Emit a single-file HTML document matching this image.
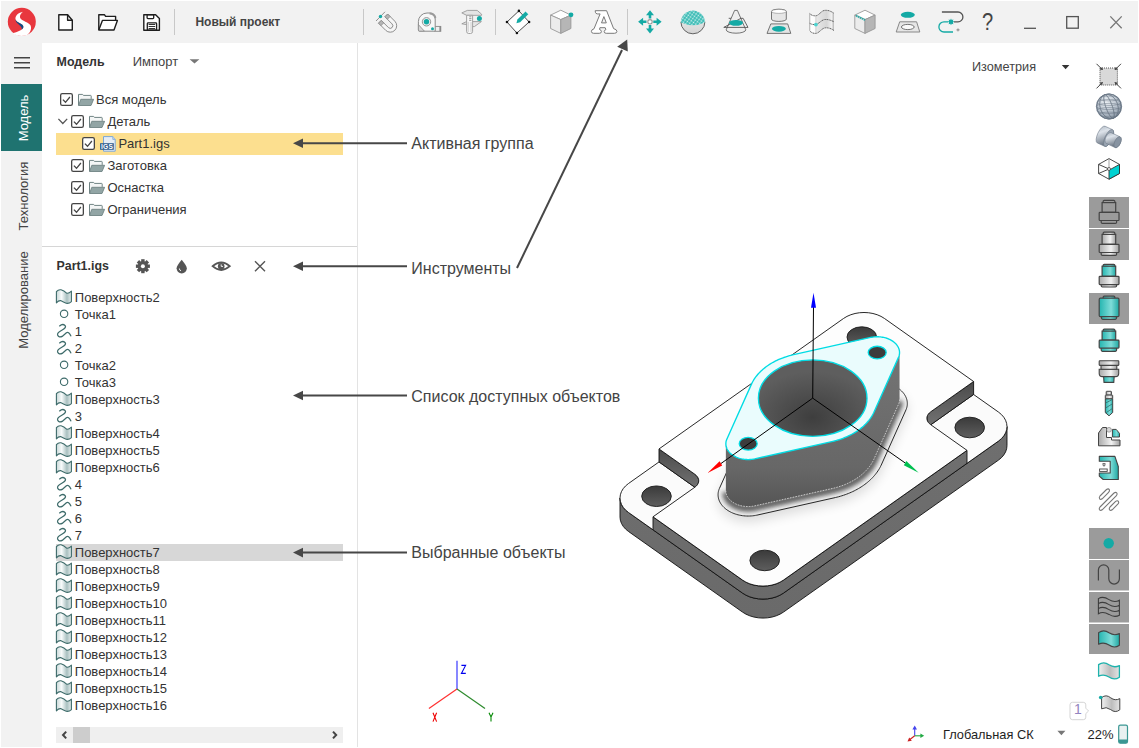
<!DOCTYPE html><html><head><meta charset="utf-8"><style>
html,body{margin:0;padding:0;}
body{width:1139px;height:748px;position:relative;overflow:hidden;background:#fff;font-family:"Liberation Sans", sans-serif;}
.t{position:absolute;white-space:nowrap;line-height:1;}
svg{position:absolute;overflow:visible;}
</style></head><body><div style="position:absolute;left:1px;top:1px;width:1137px;height:42px;background:#f2f2f2;"></div>
<div style="position:absolute;left:1px;top:43px;width:41px;height:704px;background:#f2f2f2;"></div>
<div style="position:absolute;left:357px;top:43px;width:1px;height:704px;background:#e3e3e3;"></div>
<div style="position:absolute;left:42px;top:246px;width:315px;height:1px;background:#d6d6d6;"></div>
<div style="position:absolute;left:1px;top:84px;width:41px;height:67px;background:#1f7370;"></div>
<div class="t" style="left:195.4px;top:15.54px;font-size:12px;font-weight:700;color:#444;">Новый проект</div>
<div style="position:absolute;left:174px;top:9px;width:1px;height:26px;background:#c8c8c8;"></div>
<div style="position:absolute;left:363px;top:9px;width:1px;height:26px;background:#c8c8c8;"></div>
<div style="position:absolute;left:495px;top:9px;width:1px;height:26px;background:#c8c8c8;"></div>
<div style="position:absolute;left:627px;top:9px;width:1px;height:26px;background:#c8c8c8;"></div>
<div class="t" style="left:22.5px;top:117.5px;font-size:13px;color:#fff;transform:translate(-50%,-50%) rotate(-90deg);">Модель</div>
<div class="t" style="left:22.5px;top:196px;font-size:13px;color:#444;transform:translate(-50%,-50%) rotate(-90deg);">Технология</div>
<div class="t" style="left:22.5px;top:300px;font-size:13px;color:#444;transform:translate(-50%,-50%) rotate(-90deg);">Моделирование</div>
<div class="t" style="left:56.6px;top:55.90px;font-size:12.4px;font-weight:700;color:#333;">Модель</div>
<div class="t" style="left:132.7px;top:55.40px;font-size:13px;font-weight:400;color:#444;">Импорт</div>
<div style="position:absolute;left:56px;top:133px;width:287px;height:22px;background:#fcdf8f;"></div>
<div class="t" style="left:96px;top:93.30px;font-size:13px;font-weight:400;color:#333;">Вся модель</div>
<div class="t" style="left:107.4px;top:115.30px;font-size:13px;font-weight:400;color:#333;">Деталь</div>
<div class="t" style="left:118.4px;top:137.30px;font-size:13px;font-weight:400;color:#333;">Part1.igs</div>
<div class="t" style="left:107.4px;top:159.30px;font-size:13px;font-weight:400;color:#333;">Заготовка</div>
<div class="t" style="left:107.4px;top:181.30px;font-size:13px;font-weight:400;color:#333;">Оснастка</div>
<div class="t" style="left:107.4px;top:203.30px;font-size:13px;font-weight:400;color:#333;">Ограничения</div>
<div class="t" style="left:56.5px;top:259.70px;font-size:12.4px;font-weight:700;color:#333;">Part1.igs</div>
<div style="position:absolute;left:56px;top:544px;width:287px;height:17px;background:#d7d7d7;"></div>
<div class="t" style="left:74.8px;top:291.00px;font-size:13px;font-weight:400;color:#333;">Поверхность2</div>
<div class="t" style="left:74.8px;top:308.00px;font-size:13px;font-weight:400;color:#333;">Точка1</div>
<div class="t" style="left:74.8px;top:325.00px;font-size:13px;font-weight:400;color:#333;">1</div>
<div class="t" style="left:74.8px;top:342.00px;font-size:13px;font-weight:400;color:#333;">2</div>
<div class="t" style="left:74.8px;top:359.00px;font-size:13px;font-weight:400;color:#333;">Точка2</div>
<div class="t" style="left:74.8px;top:376.00px;font-size:13px;font-weight:400;color:#333;">Точка3</div>
<div class="t" style="left:74.8px;top:393.00px;font-size:13px;font-weight:400;color:#333;">Поверхность3</div>
<div class="t" style="left:74.8px;top:410.00px;font-size:13px;font-weight:400;color:#333;">3</div>
<div class="t" style="left:74.8px;top:427.00px;font-size:13px;font-weight:400;color:#333;">Поверхность4</div>
<div class="t" style="left:74.8px;top:444.00px;font-size:13px;font-weight:400;color:#333;">Поверхность5</div>
<div class="t" style="left:74.8px;top:461.00px;font-size:13px;font-weight:400;color:#333;">Поверхность6</div>
<div class="t" style="left:74.8px;top:478.00px;font-size:13px;font-weight:400;color:#333;">4</div>
<div class="t" style="left:74.8px;top:495.00px;font-size:13px;font-weight:400;color:#333;">5</div>
<div class="t" style="left:74.8px;top:512.00px;font-size:13px;font-weight:400;color:#333;">6</div>
<div class="t" style="left:74.8px;top:529.00px;font-size:13px;font-weight:400;color:#333;">7</div>
<div class="t" style="left:74.8px;top:546.00px;font-size:13px;font-weight:400;color:#333;">Поверхность7</div>
<div class="t" style="left:74.8px;top:563.00px;font-size:13px;font-weight:400;color:#333;">Поверхность8</div>
<div class="t" style="left:74.8px;top:580.00px;font-size:13px;font-weight:400;color:#333;">Поверхность9</div>
<div class="t" style="left:74.8px;top:597.00px;font-size:13px;font-weight:400;color:#333;">Поверхность10</div>
<div class="t" style="left:74.8px;top:614.00px;font-size:13px;font-weight:400;color:#333;">Поверхность11</div>
<div class="t" style="left:74.8px;top:631.00px;font-size:13px;font-weight:400;color:#333;">Поверхность12</div>
<div class="t" style="left:74.8px;top:648.00px;font-size:13px;font-weight:400;color:#333;">Поверхность13</div>
<div class="t" style="left:74.8px;top:665.00px;font-size:13px;font-weight:400;color:#333;">Поверхность14</div>
<div class="t" style="left:74.8px;top:682.00px;font-size:13px;font-weight:400;color:#333;">Поверхность15</div>
<div class="t" style="left:74.8px;top:699.00px;font-size:13px;font-weight:400;color:#333;">Поверхность16</div>
<div style="position:absolute;left:56px;top:727px;width:287px;height:16px;background:#efefef;"></div>
<div style="position:absolute;left:73px;top:727px;width:17px;height:16px;background:#cdcdcd;"></div>
<div class="t" style="left:411.3px;top:136.16px;font-size:16px;font-weight:400;color:#444;">Активная группа</div>
<div class="t" style="left:411.3px;top:261.36px;font-size:16px;font-weight:400;color:#444;">Инструменты</div>
<div class="t" style="left:411.3px;top:389.16px;font-size:16px;font-weight:400;color:#444;">Список доступных объектов</div>
<div class="t" style="left:411.3px;top:545.26px;font-size:16px;font-weight:400;color:#444;">Выбранные объекты</div>
<div class="t" style="left:972px;top:61.25px;font-size:12.7px;font-weight:400;color:#444;">Изометрия</div>
<div class="t" style="left:943px;top:728.66px;font-size:12.8px;font-weight:400;color:#1e1e1e;">Глобальная СК</div>
<div class="t" style="left:1087.5px;top:727.60px;font-size:13px;font-weight:400;color:#1e1e1e;">22%</div>
<svg width="1139" height="748" style="left:0;top:0"><circle cx="21.8" cy="21.8" r="14" fill="#e8373e"/><path d="M23.2 11.8 C18.5 12.6 14.6 16 15.6 19.6 C16.6 23.2 23.6 23.6 23.4 27 C23.2 29.8 17 32.2 12.6 33.2 C16 35.6 20.5 36.2 24 35.8 L27 35.2 C30.5 32.5 31.8 28.6 30.6 25.6 C29.4 22.6 21.4 20.8 20.2 18 C19.4 15.8 21 13 23.2 11.8 Z" fill="#fff"/><path d="M15.6 19.6 C16.6 23.2 23.6 23.6 23.4 27 C23.3 28.2 22.4 29.2 21.6 29.6 C22.8 27 18.4 24.6 16.6 22.6 C15.8 21.6 15.5 20.6 15.6 19.6 Z" fill="#0d4f86"/><path d="M58.8 14.7 H67.6 L72.3 20.3 V30 H58.8 Z" fill="#fff" stroke="#1e1e1e" stroke-width="1.4" stroke-linejoin="round"/><path d="M67.6 14.7 V20.3 H72.3" fill="none" stroke="#1e1e1e" stroke-width="1.4" stroke-linejoin="round"/><path d="M98.8 30 V14.7 H104.4 L105.6 16.4 H115.6 V20.4" fill="#fff" stroke="#1e1e1e" stroke-width="1.4" stroke-linejoin="round"/><path d="M98.8 30 L102.4 20.4 H117.4 L114 30 Z" fill="#fff" stroke="#1e1e1e" stroke-width="1.4" stroke-linejoin="round"/><path d="M143.8 14.7 H155.6 L159.4 18.4 V30.2 H143.8 Z" fill="#fff" stroke="#1e1e1e" stroke-width="1.4" stroke-linejoin="round"/><rect x="147.1" y="14.7" width="6.6" height="3.9" rx="0.8" fill="none" stroke="#1e1e1e" stroke-width="1.3"/><rect x="147.3" y="22.9" width="9.3" height="7.3" rx="0.8" fill="none" stroke="#1e1e1e" stroke-width="1.3"/><path d="M148.6 24.5 H155.2 M148.6 26.5 H155.2 M148.6 28.5 H155.2" stroke="#1e1e1e" stroke-width="0.9"/><g transform="translate(389.6,25.1) rotate(-45) scale(0.92)"><path d="M-7 -10 V1 A7 7 0 0 0 7 1 V-10 H2.8 V1 A2.8 2.8 0 0 1 -2.8 1 V-10 Z" fill="#f6f6f6" stroke="#8a8a8a" stroke-width="1"/><rect x="-7" y="-10" width="4.2" height="3.8" fill="#b5b5b5" stroke="#8a8a8a" stroke-width="0.8"/><rect x="2.8" y="-10" width="4.2" height="3.8" fill="#b5b5b5" stroke="#8a8a8a" stroke-width="0.8"/></g><line x1="376" y1="21" x2="385" y2="11.8" stroke="#777" stroke-width="0.8"/><circle cx="380.5" cy="16.5" r="1.7" fill="#14aaa5"/><rect x="434.8" y="26.4" width="6" height="4.9" fill="#efefef" stroke="#8a8a8a" stroke-width="0.9"/><rect x="439.4" y="26.4" width="1.6" height="4.9" fill="#8a8a8a"/><path d="M418.4 30 V21.6 A8.6 8.6 0 0 1 427 13 H430 Q435.2 13.2 435.2 19 V31.2 H419.6 Q418.4 31.2 418.4 30 Z" fill="#f8f8f8" stroke="#8a8a8a" stroke-width="1"/><path d="M429.6 12.6 Q435 12.6 436.4 17.6 L434.6 18.6 Q433.4 14.6 429.6 14.6 Z" fill="#9a9a9a"/><path d="M418.4 24.6 L424.4 31.2 H419.6 Q418.4 31.2 418.4 30 Z" fill="#d8d8d8" stroke="#8a8a8a" stroke-width="0.8"/><circle cx="426.5" cy="21.8" r="4.2" fill="#eee" stroke="#8a8a8a" stroke-width="0.9"/><circle cx="426.5" cy="21.8" r="2.7" fill="#14aaa5"/><circle cx="432.5" cy="28.8" r="1.5" fill="#14aaa5"/><path d="M461.8 12.9 L467.4 10.4 H477.2 L481.6 14.2 V15.3 H466.6 Z" fill="#e4e4e4" stroke="#9a9a9a" stroke-width="0.9" stroke-linejoin="round"/><path d="M461.8 23.8 L466.6 21.6 H481.4 L474.4 26.6 H472.6 V27 L466.6 24.6 Z" fill="#e6e6e6" stroke="#9a9a9a" stroke-width="0.9" stroke-linejoin="round"/><path d="M466.6 15.3 V31.4 Q466.6 33.5 468.7 33.5 H470.5 Q472.6 33.5 472.6 31.4 V15.3 Z" fill="#f7f7f7" stroke="#9a9a9a" stroke-width="0.9"/><path d="M468.2 22 V32 M471 22 V32" stroke="#c4c4c4" stroke-width="0.8"/><path d="M469.2 16.8 H471.4 M469.2 18.6 H471.4 M469.2 20.4 H471.4" stroke="#777" stroke-width="0.7"/><circle cx="479.4" cy="18.5" r="2.5" fill="#14aaa5"/><path d="M518.9 10.9 L529.1 22 L516.9 33 L507 22 Z" fill="#fff" stroke="#222" stroke-width="0.8"/><circle cx="518.9" cy="10.9" r="1.3" fill="#111"/><circle cx="529.1" cy="22" r="1.3" fill="#111"/><circle cx="516.9" cy="33" r="1.3" fill="#111"/><circle cx="507" cy="22" r="1.3" fill="#111"/><path d="M516.4 23.3 L517.4 19.6 L525.6 11.6 L528.3 14.3 L520.1 22.3 Z" fill="#14aaa5"/><path d="M526.3 12.3 L527.6 13.6" stroke="#8ee" stroke-width="0.6"/><path d="M560.8 10.2 L570.9 15.1 L560.8 19.6 L550.6 15.1 Z" fill="#fff" stroke="#999" stroke-width="0.9" stroke-linejoin="round"/><path d="M550.6 15.1 L560.8 19.6 V33.4 L550.6 28.5 Z" fill="#ececec" stroke="#999" stroke-width="0.9" stroke-linejoin="round"/><path d="M570.9 15.1 L560.8 19.6 V33.4 L570.9 28.5 Z" fill="#b6b6b6" stroke="#999" stroke-width="0.9" stroke-linejoin="round"/><circle cx="571" cy="14.8" r="2.4" fill="#14aaa5"/><path d="M595.2 10.7 H606.6 L613.6 28.6 Q616.9 29.4 616.9 31.4 Q616.9 33.3 614.4 33.3 H606.2 Q604.1 33.3 604.2 31.5 Q604.3 30.1 605.9 29.6 L605.2 27.7 H599.9 L599.5 29.5 Q601.4 30 601.4 31.6 Q601.4 33.3 599.3 33.3 H593.6 Q591.4 33.3 591.4 31.4 Q591.4 29.5 594 28.8 L600.1 13.9 Q597.4 14.3 596 13.4 Q595.2 12.6 595.2 10.7 Z M603.9 16.6 L601.5 22.9 H606.3 Z" fill="#fff" fill-rule="evenodd" stroke="#7a7a7a" stroke-width="1" stroke-linejoin="round"/><g fill="#14aaa5"><path d="M650 10.2 L654 15.2 H651.3 V18.6 H648.7 V15.2 H646 Z"/><path d="M650 33.4 L654 28.4 H651.3 V25 H648.7 V28.4 H646 Z"/><path d="M638.1 21.8 L643.1 17.8 V20.5 H646.5 V23.1 H643.1 V25.8 Z"/><path d="M661.6 21.8 L656.6 17.8 V20.5 H653.3 V23.1 H656.6 V25.8 Z"/></g><circle cx="650" cy="21.8" r="2.2" fill="#fff" stroke="#999" stroke-width="1.1"/><defs><linearGradient id="gsph" x1="0" y1="0" x2="0" y2="1"><stop offset="0" stop-color="#f4f4f4"/><stop offset="1" stop-color="#d4d4d4"/></linearGradient><pattern id="ptt" width="2.8" height="2.8" patternUnits="userSpaceOnUse" patternTransform="rotate(35)"><rect width="2.8" height="2.8" fill="#38bab4"/><circle cx="1.4" cy="1.4" r="0.85" fill="#d2f2f0"/></pattern></defs><circle cx="692.9" cy="21.8" r="12" fill="url(#gsph)"/><path d="M680.9 21.8 A12 12 0 0 0 704.9 21.8" fill="none" stroke="#555" stroke-width="0.9"/><path d="M680.9 22.6 A12 12 0 0 1 704.9 22.6 Q693 28 680.9 22.6 Z" fill="url(#ptt)"/><path d="M726.2 29.8 L734.6 10.4 H737.4 L745.8 29.8 A9.8 3.4 0 0 1 726.2 29.8 Z" fill="#eee" stroke="#666" stroke-width="0.9"/><path d="M728.7 18.3 H731 M741 18.3 H743.1 L748 27.4 H723.8 Z" fill="none" stroke="#555" stroke-width="0.9"/><ellipse cx="736" cy="22.9" rx="7" ry="2.9" fill="#14aaa5"/><path d="M771.5 11.4 A7.4 2.2 0 0 1 786.3 11.4 V19.2 A7.4 2.2 0 0 1 771.5 19.2 Z" fill="#e6e6e6" stroke="#666" stroke-width="0.9"/><ellipse cx="778.9" cy="11.4" rx="7.4" ry="2" fill="#fff" stroke="#888" stroke-width="0.6"/><path d="M770.8 23.9 H787.7 L790.8 33.4 H767 Z" fill="#e4e4e4" stroke="#666" stroke-width="0.9"/><ellipse cx="778.9" cy="28.8" rx="7" ry="2.9" fill="#14aaa5"/><defs><linearGradient id="gwav" x1="0" y1="0" x2="1" y2="0"><stop offset="0" stop-color="#ffffff"/><stop offset="0.28" stop-color="#fafafa"/><stop offset="0.32" stop-color="#e6e6e6"/><stop offset="0.7" stop-color="#d6d6d6"/><stop offset="0.9" stop-color="#f0f0f0"/><stop offset="1" stop-color="#b4b4b4"/></linearGradient></defs><path d="M809.7 13.5 C811.5 15.5 814 16.2 816.5 15.6 C819.5 14.8 821.5 10.5 825 10.3 C829 10 832 12 834 13.3 V30.6 C832 29 829 27.6 825.5 27.8 C821.5 28.2 819 33.4 815.7 33.4 C813 33.6 810.5 32 809.7 30.8 Z" fill="url(#gwav)"/><path d="M816 15.8 V33.3" stroke="#cfcfcf" stroke-width="1.3"/><path d="M809.7 13.5 V30.8" stroke="#b8b8b8" stroke-width="1.2"/><path d="M809.7 13.5 C811.5 15.5 814 16.2 816.5 15.6 C819.5 14.8 821.5 10.5 825 10.3 C829 10 832 12 834 13.3 M834 30.6 C832 29 829 27.6 825.5 27.8 C821.5 28.2 819 33.4 815.7 33.4 C813 33.6 810.5 32 809.7 30.8 M809.7 23.3 C811.5 24.4 813.5 24.8 816 24.4 C819 23.8 821.5 19.8 825 19.5 C829 19.3 832 20.8 834 21.8" fill="none" stroke="#555" stroke-width="0.9" stroke-dasharray="1.2 0.5"/><circle cx="815.9" cy="24.6" r="1.9" fill="#4fd3cf"/><path d="M865 10.2 L875.1 15.1 L865 19.6 L854.8 15.1 Z" fill="#fff" stroke="#999" stroke-width="0.9" stroke-linejoin="round"/><path d="M854.8 15.1 L865 19.6 V33.4 L854.8 28.5 Z" fill="#ececec" stroke="#999" stroke-width="0.9" stroke-linejoin="round"/><path d="M875.1 15.1 L865 19.6 V33.4 L875.1 28.5 Z" fill="#b6b6b6" stroke="#999" stroke-width="0.9" stroke-linejoin="round"/><path d="M856 15.6 L865 20" stroke="#14aaa5" stroke-width="2.2" stroke-dasharray="1.4 0.8" opacity="0.8"/><ellipse cx="907.8" cy="14.8" rx="7" ry="3" fill="#14aaa5"/><path d="M899.7 21.8 H916.6 L919.8 32 H896.2 Z" fill="#e6e6e6" stroke="#888" stroke-width="1"/><ellipse cx="907.8" cy="27" rx="6.4" ry="2.6" fill="#fafafa" stroke="#666" stroke-width="0.9"/><path d="M941.9 12 H958 A4.9 4.9 0 0 1 958 21.8 H954" fill="none" stroke="#555" stroke-width="1.3"/><path d="M948 21.8 H944 A5 5 0 0 0 944 32 H953" fill="none" stroke="#14aaa5" stroke-width="1.3"/><polygon points="951.00,18.40 951.77,19.95 953.40,19.40 952.85,21.03 954.40,21.80 952.85,22.57 953.40,24.20 951.77,23.65 951.00,25.20 950.23,23.65 948.60,24.20 949.15,22.57 947.60,21.80 949.15,21.03 948.60,19.40 950.23,19.95" fill="#14aaa5"/><polygon points="958.00,27.70 958.57,29.33 960.20,29.90 958.57,30.47 958.00,32.10 957.43,30.47 955.80,29.90 957.43,29.33" fill="#8a8a8a"/><text x="987.5" y="30.3" text-anchor="middle" font-family="Liberation Sans" font-size="24" fill="#444" transform="translate(987.5 0) scale(0.84 1) translate(-987.5 0)">?</text><line x1="1024" y1="28.3" x2="1036" y2="28.3" stroke="#555" stroke-width="1.3"/><rect x="1066.7" y="16.6" width="11.6" height="11.6" fill="none" stroke="#555" stroke-width="1.3"/><path d="M1110.3 16.4 L1121.7 28.2 M1121.7 16.4 L1110.3 28.2" stroke="#777" stroke-width="1.3"/><path d="M14 57.8 H30 M14 62.8 H30 M14 67.8 H30" stroke="#444" stroke-width="1.5"/><rect x="60.65" y="93.65" width="11.7" height="11.7" rx="1.6" fill="#fff" stroke="#454545" stroke-width="1.3"/><path d="M62.9 99.6 L65.5 102.3 L69.9 97" fill="none" stroke="#454545" stroke-width="1.3"/><path d="M78.5 105.4 V94.4 H82.6 L83.4 95.4 H90.6 Q91.2 95.4 91.2 96.10000000000001 V98.9" fill="#f4f6f6" stroke="#6f8383" stroke-width="1"/><path d="M78.6 105.5 L80.8 99.30000000000001 H93.6 L91 105.5 Z" fill="#92a5a5" stroke="#6f8383" stroke-width="0.9" stroke-linejoin="round"/><rect x="71.65" y="115.65" width="11.7" height="11.7" rx="1.6" fill="#fff" stroke="#454545" stroke-width="1.3"/><path d="M73.9 121.6 L76.5 124.3 L80.9 119" fill="none" stroke="#454545" stroke-width="1.3"/><path d="M89.5 127.4 V116.4 H93.6 L94.4 117.4 H101.6 Q102.2 117.4 102.2 118.10000000000001 V120.9" fill="#f4f6f6" stroke="#6f8383" stroke-width="1"/><path d="M89.6 127.5 L91.8 121.30000000000001 H104.6 L102 127.5 Z" fill="#92a5a5" stroke="#6f8383" stroke-width="0.9" stroke-linejoin="round"/><rect x="71.65" y="159.65" width="11.7" height="11.7" rx="1.6" fill="#fff" stroke="#454545" stroke-width="1.3"/><path d="M73.9 165.6 L76.5 168.3 L80.9 163" fill="none" stroke="#454545" stroke-width="1.3"/><path d="M89.5 171.4 V160.4 H93.6 L94.4 161.4 H101.6 Q102.2 161.4 102.2 162.1 V164.9" fill="#f4f6f6" stroke="#6f8383" stroke-width="1"/><path d="M89.6 171.5 L91.8 165.3 H104.6 L102 171.5 Z" fill="#92a5a5" stroke="#6f8383" stroke-width="0.9" stroke-linejoin="round"/><rect x="71.65" y="181.65" width="11.7" height="11.7" rx="1.6" fill="#fff" stroke="#454545" stroke-width="1.3"/><path d="M73.9 187.6 L76.5 190.3 L80.9 185" fill="none" stroke="#454545" stroke-width="1.3"/><path d="M89.5 193.4 V182.4 H93.6 L94.4 183.4 H101.6 Q102.2 183.4 102.2 184.1 V186.9" fill="#f4f6f6" stroke="#6f8383" stroke-width="1"/><path d="M89.6 193.5 L91.8 187.3 H104.6 L102 193.5 Z" fill="#92a5a5" stroke="#6f8383" stroke-width="0.9" stroke-linejoin="round"/><rect x="71.65" y="203.65" width="11.7" height="11.7" rx="1.6" fill="#fff" stroke="#454545" stroke-width="1.3"/><path d="M73.9 209.6 L76.5 212.3 L80.9 207" fill="none" stroke="#454545" stroke-width="1.3"/><path d="M89.5 215.4 V204.4 H93.6 L94.4 205.4 H101.6 Q102.2 205.4 102.2 206.1 V208.9" fill="#f4f6f6" stroke="#6f8383" stroke-width="1"/><path d="M89.6 215.5 L91.8 209.3 H104.6 L102 215.5 Z" fill="#92a5a5" stroke="#6f8383" stroke-width="0.9" stroke-linejoin="round"/><rect x="82.65" y="137.65" width="11.7" height="11.7" rx="1.6" fill="#fff" stroke="#454545" stroke-width="1.3"/><path d="M84.9 143.6 L87.5 146.3 L91.9 141" fill="none" stroke="#454545" stroke-width="1.3"/><path d="M58.4 118.9 L62.8 123.5 L67.2 118.9" fill="none" stroke="#555" stroke-width="1.3"/><path d="M103.5 136.6 H112.8 L115.2 139.4 V151.2 H103.5 Z" fill="#e6edf5" stroke="#7aa7d8" stroke-width="1"/><path d="M112.8 136.6 V139.4 H115.2" fill="#cfdcec" stroke="#7aa7d8" stroke-width="0.8"/><rect x="100.1" y="143.2" width="13.7" height="6.6" fill="#2f5c8e"/><text x="107" y="149" text-anchor="middle" font-family="Liberation Sans" font-weight="700" font-size="6.6" fill="#fff" letter-spacing="0.2">IGS</text><path d="M189.6 59.2 H199.4 L194.5 63.6 Z" fill="#777"/><g fill="#555"><rect x="141.20000000000002" y="259.2" width="3.4" height="4" transform="rotate(0 142.9 266.2)"/><rect x="141.20000000000002" y="259.2" width="3.4" height="4" transform="rotate(45 142.9 266.2)"/><rect x="141.20000000000002" y="259.2" width="3.4" height="4" transform="rotate(90 142.9 266.2)"/><rect x="141.20000000000002" y="259.2" width="3.4" height="4" transform="rotate(135 142.9 266.2)"/><rect x="141.20000000000002" y="259.2" width="3.4" height="4" transform="rotate(180 142.9 266.2)"/><rect x="141.20000000000002" y="259.2" width="3.4" height="4" transform="rotate(225 142.9 266.2)"/><rect x="141.20000000000002" y="259.2" width="3.4" height="4" transform="rotate(270 142.9 266.2)"/><rect x="141.20000000000002" y="259.2" width="3.4" height="4" transform="rotate(315 142.9 266.2)"/><circle cx="142.9" cy="266.2" r="5.2"/></g><circle cx="142.9" cy="266.2" r="2" fill="#fff"/><path d="M181.7 259.8 Q186.8 266 186.8 268.3 A5.1 5.1 0 0 1 176.6 268.3 Q176.6 266 181.7 259.8 Z" fill="#555"/><path d="M179.4 268.5 Q179.4 270.4 181 270.9" fill="none" stroke="#fff" stroke-width="0.9"/><path d="M212.6 266.2 Q221.2 258.6 229.8 266.2 Q221.2 273.8 212.6 266.2 Z" fill="none" stroke="#555" stroke-width="1.8"/><circle cx="221.2" cy="266.2" r="3.3" fill="#555"/><path d="M221.2 264.4 V266.4 H223" fill="none" stroke="#fff" stroke-width="0.9"/><path d="M255 261.2 L265 271.2 M265 261.2 L255 271.2" stroke="#555" stroke-width="1.4"/><defs><linearGradient id="gsurf" x1="0" y1="0" x2="1" y2="0"><stop offset="0" stop-color="#c9d8d8"/><stop offset="0.35" stop-color="#f8fbfb"/><stop offset="0.7" stop-color="#a9c0c0"/><stop offset="1" stop-color="#e6eeee"/></linearGradient></defs><path d="M56.4 291.6 Q58.5 289.2 61 289.8 Q64 290.6 66.6 293.2 Q69 293.6 71.4 291.2 V301.6 Q69 303.8 66.2 303.2 Q63.5 302.2 60.6 300.6 Q58.4 300.4 56.4 302.8 Z" fill="url(#gsurf)" stroke="#3d6b6a" stroke-width="1.1" stroke-linejoin="round"/><circle cx="64.1" cy="313.8" r="3.7" fill="none" stroke="#3d6b6a" stroke-width="1.1"/><path d="M59.6 325.9 Q62.6 323.4 65 325.4 Q66.8 327.6 62.2 330 Q57 332.6 57.6 335 Q59 338 62.2 336.4 L66.4 332.8 Q68.6 331.2 70.8 335.8" fill="none" stroke="#3d6b6a" stroke-width="1.3" stroke-linecap="round"/><path d="M59.6 342.9 Q62.6 340.4 65 342.4 Q66.8 344.6 62.2 347 Q57 349.6 57.6 352 Q59 355 62.2 353.4 L66.4 349.8 Q68.6 348.2 70.8 352.8" fill="none" stroke="#3d6b6a" stroke-width="1.3" stroke-linecap="round"/><circle cx="64.1" cy="364.8" r="3.7" fill="none" stroke="#3d6b6a" stroke-width="1.1"/><circle cx="64.1" cy="381.8" r="3.7" fill="none" stroke="#3d6b6a" stroke-width="1.1"/><path d="M56.4 393.6 Q58.5 391.2 61 391.8 Q64 392.6 66.6 395.2 Q69 395.6 71.4 393.2 V403.6 Q69 405.8 66.2 405.2 Q63.5 404.2 60.6 402.6 Q58.4 402.4 56.4 404.8 Z" fill="url(#gsurf)" stroke="#3d6b6a" stroke-width="1.1" stroke-linejoin="round"/><path d="M59.6 410.9 Q62.6 408.4 65 410.4 Q66.8 412.6 62.2 415 Q57 417.6 57.6 420 Q59 423 62.2 421.4 L66.4 417.8 Q68.6 416.2 70.8 420.8" fill="none" stroke="#3d6b6a" stroke-width="1.3" stroke-linecap="round"/><path d="M56.4 427.6 Q58.5 425.2 61 425.8 Q64 426.6 66.6 429.2 Q69 429.6 71.4 427.2 V437.6 Q69 439.8 66.2 439.2 Q63.5 438.2 60.6 436.6 Q58.4 436.4 56.4 438.8 Z" fill="url(#gsurf)" stroke="#3d6b6a" stroke-width="1.1" stroke-linejoin="round"/><path d="M56.4 444.6 Q58.5 442.2 61 442.8 Q64 443.6 66.6 446.2 Q69 446.6 71.4 444.2 V454.6 Q69 456.8 66.2 456.2 Q63.5 455.2 60.6 453.6 Q58.4 453.4 56.4 455.8 Z" fill="url(#gsurf)" stroke="#3d6b6a" stroke-width="1.1" stroke-linejoin="round"/><path d="M56.4 461.6 Q58.5 459.2 61 459.8 Q64 460.6 66.6 463.2 Q69 463.6 71.4 461.2 V471.6 Q69 473.8 66.2 473.2 Q63.5 472.2 60.6 470.6 Q58.4 470.4 56.4 472.8 Z" fill="url(#gsurf)" stroke="#3d6b6a" stroke-width="1.1" stroke-linejoin="round"/><path d="M59.6 478.9 Q62.6 476.4 65 478.4 Q66.8 480.6 62.2 483 Q57 485.6 57.6 488 Q59 491 62.2 489.4 L66.4 485.8 Q68.6 484.2 70.8 488.8" fill="none" stroke="#3d6b6a" stroke-width="1.3" stroke-linecap="round"/><path d="M59.6 495.9 Q62.6 493.4 65 495.4 Q66.8 497.6 62.2 500 Q57 502.6 57.6 505 Q59 508 62.2 506.4 L66.4 502.8 Q68.6 501.2 70.8 505.8" fill="none" stroke="#3d6b6a" stroke-width="1.3" stroke-linecap="round"/><path d="M59.6 512.9 Q62.6 510.4 65 512.4 Q66.8 514.6 62.2 517 Q57 519.6 57.6 522 Q59 525 62.2 523.4 L66.4 519.8 Q68.6 518.2 70.8 522.8" fill="none" stroke="#3d6b6a" stroke-width="1.3" stroke-linecap="round"/><path d="M59.6 529.9 Q62.6 527.4 65 529.4 Q66.8 531.6 62.2 534 Q57 536.6 57.6 539 Q59 542 62.2 540.4 L66.4 536.8 Q68.6 535.2 70.8 539.8" fill="none" stroke="#3d6b6a" stroke-width="1.3" stroke-linecap="round"/><path d="M56.4 546.6 Q58.5 544.2 61 544.8 Q64 545.6 66.6 548.2 Q69 548.6 71.4 546.2 V556.6 Q69 558.8 66.2 558.2 Q63.5 557.2 60.6 555.6 Q58.4 555.4 56.4 557.8 Z" fill="url(#gsurf)" stroke="#3d6b6a" stroke-width="1.1" stroke-linejoin="round"/><path d="M56.4 563.6 Q58.5 561.2 61 561.8 Q64 562.6 66.6 565.2 Q69 565.6 71.4 563.2 V573.6 Q69 575.8 66.2 575.2 Q63.5 574.2 60.6 572.6 Q58.4 572.4 56.4 574.8 Z" fill="url(#gsurf)" stroke="#3d6b6a" stroke-width="1.1" stroke-linejoin="round"/><path d="M56.4 580.6 Q58.5 578.2 61 578.8 Q64 579.6 66.6 582.2 Q69 582.6 71.4 580.2 V590.6 Q69 592.8 66.2 592.2 Q63.5 591.2 60.6 589.6 Q58.4 589.4 56.4 591.8 Z" fill="url(#gsurf)" stroke="#3d6b6a" stroke-width="1.1" stroke-linejoin="round"/><path d="M56.4 597.6 Q58.5 595.2 61 595.8 Q64 596.6 66.6 599.2 Q69 599.6 71.4 597.2 V607.6 Q69 609.8 66.2 609.2 Q63.5 608.2 60.6 606.6 Q58.4 606.4 56.4 608.8 Z" fill="url(#gsurf)" stroke="#3d6b6a" stroke-width="1.1" stroke-linejoin="round"/><path d="M56.4 614.6 Q58.5 612.2 61 612.8 Q64 613.6 66.6 616.2 Q69 616.6 71.4 614.2 V624.6 Q69 626.8 66.2 626.2 Q63.5 625.2 60.6 623.6 Q58.4 623.4 56.4 625.8 Z" fill="url(#gsurf)" stroke="#3d6b6a" stroke-width="1.1" stroke-linejoin="round"/><path d="M56.4 631.6 Q58.5 629.2 61 629.8 Q64 630.6 66.6 633.2 Q69 633.6 71.4 631.2 V641.6 Q69 643.8 66.2 643.2 Q63.5 642.2 60.6 640.6 Q58.4 640.4 56.4 642.8 Z" fill="url(#gsurf)" stroke="#3d6b6a" stroke-width="1.1" stroke-linejoin="round"/><path d="M56.4 648.6 Q58.5 646.2 61 646.8 Q64 647.6 66.6 650.2 Q69 650.6 71.4 648.2 V658.6 Q69 660.8 66.2 660.2 Q63.5 659.2 60.6 657.6 Q58.4 657.4 56.4 659.8 Z" fill="url(#gsurf)" stroke="#3d6b6a" stroke-width="1.1" stroke-linejoin="round"/><path d="M56.4 665.6 Q58.5 663.2 61 663.8 Q64 664.6 66.6 667.2 Q69 667.6 71.4 665.2 V675.6 Q69 677.8 66.2 677.2 Q63.5 676.2 60.6 674.6 Q58.4 674.4 56.4 676.8 Z" fill="url(#gsurf)" stroke="#3d6b6a" stroke-width="1.1" stroke-linejoin="round"/><path d="M56.4 682.6 Q58.5 680.2 61 680.8 Q64 681.6 66.6 684.2 Q69 684.6 71.4 682.2 V692.6 Q69 694.8 66.2 694.2 Q63.5 693.2 60.6 691.6 Q58.4 691.4 56.4 693.8 Z" fill="url(#gsurf)" stroke="#3d6b6a" stroke-width="1.1" stroke-linejoin="round"/><path d="M56.4 699.6 Q58.5 697.2 61 697.8 Q64 698.6 66.6 701.2 Q69 701.6 71.4 699.2 V709.6 Q69 711.8 66.2 711.2 Q63.5 710.2 60.6 708.6 Q58.4 708.4 56.4 710.8 Z" fill="url(#gsurf)" stroke="#3d6b6a" stroke-width="1.1" stroke-linejoin="round"/><path d="M66.2 731.6 L63 735 L66.2 738.4" fill="none" stroke="#444" stroke-width="2"/><path d="M333 731.6 L336.2 735 L333 738.4" fill="none" stroke="#444" stroke-width="2"/><defs><linearGradient id="gsil" x1="0" y1="0" x2="1" y2="0"><stop offset="0" stop-color="#a9a9a9"/><stop offset="0.6" stop-color="#f2f2f2"/><stop offset="1" stop-color="#a0a0a0"/></linearGradient><linearGradient id="gtl" x1="0" y1="0" x2="1" y2="0"><stop offset="0" stop-color="#24b5b0"/><stop offset="0.6" stop-color="#7fdcd8"/><stop offset="1" stop-color="#20a8a3"/></linearGradient><linearGradient id="gflag" x1="0" y1="0" x2="1" y2="0"><stop offset="0" stop-color="#f0f0f0"/><stop offset="0.55" stop-color="#bdbdbd"/><stop offset="1" stop-color="#e4e4e4"/></linearGradient><radialGradient id="gsph2" cx="0.4" cy="0.3" r="0.75"><stop offset="0" stop-color="#eef2f6"/><stop offset="0.6" stop-color="#b6c0cb"/><stop offset="1" stop-color="#7f8c9b"/></radialGradient><linearGradient id="gshaft" x1="0" y1="0" x2="0" y2="1"><stop offset="0" stop-color="#d9dee4"/><stop offset="1" stop-color="#7f8995"/></linearGradient></defs><rect x="1089" y="197" width="40" height="31" fill="#9b9b9b"/><rect x="1089" y="229" width="40" height="31" fill="#9b9b9b"/><rect x="1089" y="293" width="40" height="31" fill="#9b9b9b"/><rect x="1089" y="528" width="40" height="31" fill="#9b9b9b"/><rect x="1089" y="560" width="40" height="30.5" fill="#9b9b9b"/><rect x="1089" y="592" width="40" height="30.5" fill="#9b9b9b"/><rect x="1089" y="624" width="40" height="30" fill="#9b9b9b"/><rect x="1100" y="68" width="17.4" height="17" fill="#d9d9d9" stroke="#555" stroke-width="1" stroke-dasharray="1 1"/><path d="M1096.5 63.8 L1102.5 69.8 M1121 63.8 L1115 69.8 M1096.5 88.4 L1102.5 82.4 M1121 88.4 L1115 82.4" stroke="#444" stroke-width="1"/><path d="M1102.8 70.1 L1099.6 69.4 L1102.1 66.9 Z M1114.7 70.1 L1117.9 69.4 L1115.4 66.9 Z M1102.8 82.1 L1099.6 82.8 L1102.1 85.3 Z M1114.7 82.1 L1117.9 82.8 L1115.4 85.3 Z" fill="#444"/><circle cx="1109" cy="106.5" r="12.6" fill="url(#gsph2)" stroke="#7d8a99" stroke-width="0.8"/><g fill="none" stroke="#5f6c7b" stroke-width="0.55" opacity="0.8"><ellipse cx="1109" cy="98.5" rx="9.73" ry="2.43" /><ellipse cx="1109" cy="102.5" rx="11.95" ry="2.99" /><ellipse cx="1109" cy="106.5" rx="12.60" ry="3.15" /><ellipse cx="1109" cy="110.5" rx="11.95" ry="2.99" /><ellipse cx="1109" cy="114.5" rx="9.73" ry="2.43" /><ellipse cx="1109" cy="106.5" rx="12.17" ry="12.6" transform="rotate(-20 1109 106.5)"/><ellipse cx="1109" cy="106.5" rx="8.91" ry="12.6" transform="rotate(-20 1109 106.5)"/><ellipse cx="1109" cy="106.5" rx="3.26" ry="12.6" transform="rotate(-20 1109 106.5)"/><ellipse cx="1109" cy="106.5" rx="3.26" ry="12.6" transform="rotate(-20 1109 106.5)"/><ellipse cx="1109" cy="106.5" rx="8.91" ry="12.6" transform="rotate(-20 1109 106.5)"/><ellipse cx="1109" cy="106.5" rx="12.17" ry="12.6" transform="rotate(-20 1109 106.5)"/></g><defs><linearGradient id="gcyl" x1="0" y1="0" x2="0.3" y2="1"><stop offset="0" stop-color="#aab3be"/><stop offset="0.35" stop-color="#dde3ea"/><stop offset="1" stop-color="#66717f"/></linearGradient></defs><path d="M1105.09 126.26 L1112.49 129.66 A3.6 9.2 25 0 1 1104.71 146.34 L1097.31 142.94 A3.6 9.2 25 0 1 1105.09 126.26 Z" fill="url(#gcyl)" stroke="#6f7b89" stroke-width="0.6"/><ellipse cx="1108.60" cy="138.00" rx="3.6" ry="9.2" transform="rotate(25 1108.60 138.00)" fill="#9aa5b2" stroke="#6f7b89" stroke-width="0.6"/><path d="M1111.09 132.65 L1120.09 136.85 A2.9 5.9 25 0 1 1115.11 147.55 L1106.11 143.35 A2.9 5.9 25 0 1 1111.09 132.65 Z" fill="url(#gcyl)" stroke="#6f7b89" stroke-width="0.6"/><ellipse cx="1117.60" cy="142.20" rx="2.9" ry="5.9" transform="rotate(25 1117.60 142.20)" fill="#8793a1" stroke="#6f7b89" stroke-width="0.6"/><path d="M1109 158.6 L1119.5 164.4 V173.5 L1109 179.2 L1098.6 173.5 V164.4 Z" fill="#fff" stroke="#333" stroke-width="0.9" stroke-linejoin="round"/><path d="M1109 170.2 L1119.5 164.4 V173.5 L1109 179.2 Z" fill="#00d2d2" stroke="#333" stroke-width="0.9" stroke-linejoin="round"/><path d="M1098.6 164.4 L1109 169 L1098.6 173.5" fill="none" stroke="#333" stroke-width="0.9"/><path d="M1109 158.6 V168" fill="none" stroke="#999" stroke-width="0.9"/><circle cx="1109" cy="169" r="1.5" fill="#fff" stroke="#333" stroke-width="0.7"/><rect x="1101.2" y="212.4" width="15.4" height="10.999999999999995" rx="1.2" fill="#9b9b9b" stroke="#444" stroke-width="1.2"/><rect x="1103.1" y="200.4" width="11.8" height="3.1999999999999886" rx="1.2" fill="#9b9b9b" stroke="#444" stroke-width="1.2"/><rect x="1102.1" y="202.6" width="13.6" height="9.700000000000017" fill="#9b9b9b" stroke="#444" stroke-width="1.2"/><rect x="1099.2" y="212.3" width="19.8" height="8.199999999999989" rx="0.8" fill="#9b9b9b" stroke="#444" stroke-width="1.2"/><rect x="1101.2" y="244.4" width="15.4" height="10.999999999999995" rx="1.2" fill="url(#gsil)" stroke="#444" stroke-width="1.2"/><rect x="1103.1" y="232.2" width="11.8" height="3.200000000000017" rx="1.2" fill="url(#gsil)" stroke="#444" stroke-width="1.2"/><rect x="1102.1" y="234.4" width="13.6" height="9.900000000000006" fill="url(#gsil)" stroke="#444" stroke-width="1.2"/><rect x="1099.2" y="244.3" width="19.8" height="8.199999999999989" rx="0.8" fill="url(#gsil)" stroke="#444" stroke-width="1.2"/><rect x="1101.2" y="276.40000000000003" width="15.4" height="10.599999999999989" rx="1.2" fill="url(#gsil)" stroke="#444" stroke-width="1.2"/><rect x="1103.1" y="264.3" width="11.8" height="2.8999999999999773" rx="1.2" fill="url(#gtl)" stroke="#444" stroke-width="1.2"/><rect x="1102.1" y="266.2" width="13.6" height="10.100000000000023" fill="url(#gtl)" stroke="#444" stroke-width="1.2"/><rect x="1099.2" y="276.3" width="19.8" height="8.300000000000011" rx="0.8" fill="url(#gsil)" stroke="#444" stroke-width="1.2"/><rect x="1101.5" y="314.8" width="15" height="4.5" rx="1.2" fill="url(#gtl)" stroke="#444" stroke-width="1.2"/><rect x="1103.1" y="296.2" width="11.8" height="3" rx="1.2" fill="url(#gtl)" stroke="#444" stroke-width="1.2"/><rect x="1099.2" y="298.2" width="19.8" height="18.4" rx="1.2" fill="url(#gtl)" stroke="#444" stroke-width="1.2"/><rect x="1101.2" y="340.20000000000005" width="15.4" height="11.099999999999989" rx="1.2" fill="url(#gtl)" stroke="#444" stroke-width="1.2"/><rect x="1103.1" y="329.1" width="11.8" height="3.0" rx="1.2" fill="url(#gtl)" stroke="#444" stroke-width="1.2"/><rect x="1102.1" y="331.1" width="13.6" height="9.0" fill="url(#gtl)" stroke="#444" stroke-width="1.2"/><rect x="1099.2" y="340.1" width="19.8" height="8.0" rx="0.8" fill="url(#gtl)" stroke="#444" stroke-width="1.2"/><path d="M1103.6 376.4 H1114.2 L1113.8 382.4 H1104 Z" fill="url(#gtl)" stroke="#444" stroke-width="1.1"/><path d="M1099.2 369.3 H1118.7 V373.5 Q1118.7 376.6 1115.5 376.6 H1102.4 Q1099.2 376.6 1099.2 373.5 Z" fill="url(#gsil)" stroke="#444" stroke-width="1.1"/><rect x="1101" y="365.4" width="15.8" height="3.9" fill="url(#gsil)" stroke="#444" stroke-width="1.1"/><rect x="1099.2" y="360.8" width="19.6" height="4.6" rx="0.6" fill="url(#gsil)" stroke="#444" stroke-width="1.1"/><rect x="1106.2" y="391.3" width="5.2" height="3.8" rx="0.5" fill="url(#gsil)" stroke="#444" stroke-width="1"/><rect x="1105.3" y="395.1" width="7.4" height="3.8" rx="0.5" fill="url(#gsil)" stroke="#444" stroke-width="1"/><path d="M1105.3 398.9 H1112.7 V412.5 L1109 415.8 L1105.3 412.5 Z" fill="url(#gtl)" stroke="#444" stroke-width="1"/><path d="M1105.6 403 L1112.4 399.5 M1105.6 408 L1112.4 403.8 M1105.6 413 L1112.4 408.5" stroke="#2f6e6c" stroke-width="0.8"/><path d="M1098.5 433 L1102.5 427.5 H1106.5 V437.5 H1111.5 V440 H1120 V445.8 H1098.5 Z" fill="url(#gsil)" stroke="#444" stroke-width="1"/><circle cx="1109" cy="429.8" r="2.4" fill="#d8d8d8" stroke="#777" stroke-width="0.6"/><path d="M1112.4 429.4 H1116.2 L1119.5 433.4 V437 H1112.4 Z" fill="url(#gtl)" stroke="#444" stroke-width="1"/><path d="M1099.3 456.4 H1114.9 L1118.3 466.5 V479.5 H1103.2 L1099.3 476.1 V473 H1110.2 V461.3 H1099.3 Z" fill="url(#gtl)" stroke="#444" stroke-width="1.1" stroke-linejoin="round"/><path d="M1102.8 463.6 H1105.2 L1104.6 466 H1103.4 Z" fill="none" stroke="#444" stroke-width="0.8"/><rect x="1099.6" y="469" width="7.6" height="2.4" fill="none" stroke="#444" stroke-width="0.9"/><g fill="none" stroke="#777" stroke-width="1.1"><path d="M1100 496 L1106.5 489.5 Q1108.3 488.2 1109.3 489.6 Q1110 491 1108.6 492.4 L1102.2 498.8 Q1100.6 500 1099.6 498.8 Q1098.8 497.4 1100 496 Z"/><path d="M1100 507 L1114 493 Q1115.8 491.7 1116.8 493 Q1117.6 494.4 1116.2 495.8 L1102.2 509.8 Q1100.6 511 1099.6 509.8 Q1098.8 508.4 1100 507 Z"/><path d="M1110 507 L1115.6 501.4 Q1117.4 500.1 1118.4 501.4 Q1119.2 502.8 1117.8 504.2 L1112.2 509.8 Q1110.6 511 1109.6 509.8 Q1108.8 508.4 1110 507 Z"/></g><circle cx="1108.7" cy="543.2" r="5.2" fill="#14aaa5"/><path d="M1098.4 580.6 V570 A5.2 5.2 0 0 1 1108.8 570 V578.8 A5.3 5.3 0 0 0 1119.4 578.8 V569.5" fill="none" stroke="#444" stroke-width="1.2"/><path d="M1098.4 598.6 Q1103 595.8 1109 599.6 Q1114.5 603 1119.4 600.2 V615.2 Q1114.5 618 1109 614.4 Q1103 611 1098.4 613.8 Z M1098.4 603.6 Q1103 600.8 1109 604.6 Q1114.5 608 1119.4 605.2 M1098.4 608.6 Q1103 605.8 1109 609.6 Q1114.5 613 1119.4 610.2" fill="none" stroke="#3d3d3d" stroke-width="1.1"/><path d="M1098.6 632.6 Q1103.8 629.0 1109.0 632.8000000000001 Q1114.1999999999998 636.2 1119.3999999999999 633.6 V645.2 Q1114.1999999999998 648.8000000000001 1109.0 645.0 Q1103.8 641.6 1098.6 644.2 Z" fill="url(#gtl)" stroke="#444" stroke-width="1.1" stroke-linejoin="round"/><path d="M1098.6 664.6 Q1103.8 661.0 1109.0 664.8000000000001 Q1114.1999999999998 668.2 1119.3999999999999 665.6 V677.2 Q1114.1999999999998 680.8000000000001 1109.0 677.0 Q1103.8 673.6 1098.6 676.2 Z" fill="url(#gflag)" stroke="#1eb2ac" stroke-width="1.3" stroke-linejoin="round"/><path d="M1101.6 697.6 Q1106.1499999999999 694.0 1110.6999999999998 697.8000000000001 Q1115.25 701.2 1119.8 698.6 V709.8000000000001 Q1115.25 713.4000000000001 1110.6999999999998 709.6 Q1106.1499999999999 706.2 1101.6 708.8000000000001 Z" fill="url(#gflag)" stroke="#444" stroke-width="1.0" stroke-linejoin="round"/><circle cx="1100.7" cy="697.5" r="1.8" fill="#14aaa5"/><path d="M1072.5 702.3 H1083.3 Q1085.8 702.3 1085.8 704.8 V708.2 L1088.6 711 L1085.8 713.6 V717.2 Q1085.8 719.7 1083.3 719.7 H1072.5 Q1070 719.7 1070 717.2 V704.8 Q1070 702.3 1072.5 702.3 Z" fill="#fff" stroke="#d0d0d0" stroke-width="0.9"/><text x="1077.8" y="714.3" text-anchor="middle" font-family="Liberation Sans" font-size="14" fill="#9484c0">1</text><rect x="1118.7" y="725.2" width="8.8" height="18" rx="1.6" fill="#e9f1f1" stroke="#3a9793" stroke-width="1.2"/><path d="M1118.7 739.6 H1127.5 V741.6 Q1127.5 743.2 1125.9 743.2 H1120.3 Q1118.7 743.2 1118.7 741.6 Z" fill="#3a9793"/><path d="M1057.4 730.8 H1065.4 L1061.4 735.3 Z" fill="#777"/><path d="M1061.8 65 H1069.4 L1065.6 69.2 Z" fill="#333"/><path d="M914.7 735.8 V727.5" stroke="#4444ee" stroke-width="1.1"/><path d="M914.7 725.6 L917 729.4 H912.4 Z" fill="#4444ee"/><path d="M914.7 735.8 H921.6" stroke="#22aa44" stroke-width="1.1"/><path d="M924.2 735.8 L920.4 733.5 V738.1 Z" fill="#22aa44"/><path d="M914.7 735.8 L909.6 739.8" stroke="#cc2222" stroke-width="1.1"/><path d="M907.5 741.6 L909.2 737.6 L911.8 740.8 Z" fill="#cc2222"/><line x1="457" y1="689" x2="457" y2="660.7" stroke="#6a6aff" stroke-width="1.6"/><line x1="457" y1="689" x2="428.9" y2="708.6" stroke="#ff3030" stroke-width="1.2"/><line x1="457" y1="689" x2="485" y2="708.6" stroke="#2e8b2e" stroke-width="1.2"/><path d="M461.4 665.4 H465.6 L461.4 673.4 H465.8" fill="none" stroke="#0000ee" stroke-width="1.1"/><path d="M433 712.8 L436.6 721.6 M436.6 712.8 L433 721.6" fill="none" stroke="#ee0000" stroke-width="1.1"/><path d="M489 712.8 L491 717 L493 712.8 M491 717 V721.6" fill="none" stroke="#008800" stroke-width="1.1"/><defs><linearGradient id="gside" x1="0" y1="0" x2="0" y2="1"><stop offset="0" stop-color="#6f6f6f"/><stop offset="1" stop-color="#6a6a6a"/></linearGradient><linearGradient id="gwall" x1="0" y1="0" x2="0" y2="1"><stop offset="0" stop-color="#4a4a4a"/><stop offset="1" stop-color="#7a7a7a"/></linearGradient><linearGradient id="gboss" x1="0" y1="0" x2="0" y2="1"><stop offset="0" stop-color="#747474"/><stop offset="0.75" stop-color="#676767"/><stop offset="1" stop-color="#555"/></linearGradient><linearGradient id="ghole" x1="0" y1="0" x2="0" y2="1"><stop offset="0" stop-color="#3a3a3a"/><stop offset="0.6" stop-color="#505050"/><stop offset="1" stop-color="#5e5e5e"/></linearGradient><radialGradient id="gbore" cx="0.5" cy="0.75" r="0.6"><stop offset="0" stop-color="#3e3e3e"/><stop offset="1" stop-color="#5e5e5e"/></radialGradient><filter id="blur6" x="-30%" y="-30%" width="160%" height="160%"><feGaussianBlur stdDeviation="6"/></filter><filter id="blur3" x="-30%" y="-30%" width="160%" height="160%"><feGaussianBlur stdDeviation="2.5"/></filter></defs><path d="M620.01 497.99 L620.37 501.20 L621.43 504.33 L623.17 507.30 L625.55 510.04 L628.50 512.49 L742.50 593.08 L745.96 595.17 L749.84 596.85 L754.04 598.08 L758.46 598.83 L763.00 599.09 L767.54 598.83 L771.96 598.08 L776.16 596.85 L780.04 595.17 L783.50 593.08 L998.50 441.08 L1001.45 438.63 L1003.83 435.89 L1005.57 432.92 L1006.63 429.79 L1006.99 426.58 L1006.99 445.58 L1006.63 448.79 L1005.57 451.92 L1003.83 454.89 L1001.45 457.63 L998.50 460.08 L783.50 612.08 L780.04 614.17 L776.16 615.85 L771.96 617.08 L767.54 617.83 L763.00 618.09 L758.46 617.83 L754.04 617.08 L749.84 615.85 L745.96 614.17 L742.50 612.08 L628.50 531.49 L625.55 529.04 L623.17 526.30 L621.43 523.33 L620.37 520.20 L620.01 516.99 Z" fill="url(#gside)" stroke="#111" stroke-width="0.9" stroke-linejoin="round"/><path d="M659.00 461.94 L695.00 487.39 L696.30 488.46 L697.34 489.66 L698.10 490.97 L698.57 492.34 L698.73 493.75 L698.57 495.16 L698.10 496.53 L697.34 497.84 L696.30 499.04 L695.00 500.11 L653.00 529.81 L628.50 512.49 L625.55 510.04 L623.17 507.30 L621.43 504.33 L620.37 501.20 L620.01 497.99 L620.37 494.79 L621.43 491.66 L623.17 488.69 L625.55 485.94 L628.50 483.50 Z" fill="#fbfbfb" stroke="#111" stroke-width="0.9" stroke-linejoin="round"/><path d="M973.60 394.49 L998.50 412.09 L1001.45 414.54 L1003.83 417.28 L1005.57 420.25 L1006.63 423.38 L1006.99 426.58 L1006.63 429.79 L1005.57 432.92 L1003.83 435.89 L1001.45 438.63 L998.50 441.08 L967.00 463.35 L930.60 437.61 L929.30 436.54 L928.26 435.34 L927.50 434.03 L927.03 432.66 L926.87 431.25 L927.03 429.84 L927.50 428.47 L928.26 427.17 L929.30 425.96 L930.60 424.89 Z" fill="#fbfbfb" stroke="#111" stroke-width="0.9" stroke-linejoin="round"/><path d="M967.00 450.35 L783.50 580.08 L780.04 582.17 L776.16 583.85 L771.96 585.08 L767.54 585.83 L763.00 586.09 L758.46 585.83 L754.04 585.08 L749.84 583.85 L745.96 582.17 L742.50 580.08 L653.00 516.81 L653.00 529.81 L742.50 593.08 L745.96 595.17 L749.84 596.85 L754.04 598.08 L758.46 598.83 L763.00 599.09 L767.54 598.83 L771.96 598.08 L776.16 596.85 L780.04 595.17 L783.50 593.08 L967.00 463.35 Z" fill="url(#gside)" stroke="#111" stroke-width="0.9" stroke-linejoin="round"/><ellipse cx="656.50" cy="496.22" rx="14.8" ry="10.3" fill="url(#ghole)" stroke="#1a1a1a" stroke-width="0.9"/><ellipse cx="969.70" cy="427.50" rx="14.8" ry="10.3" fill="url(#ghole)" stroke="#1a1a1a" stroke-width="0.9"/><path d="M659.00 448.94 L695.00 474.39 L696.43 475.59 L697.54 476.95 L698.29 478.42 L698.68 479.97 L698.68 481.53 L698.29 483.08 L698.29 496.08 L698.68 494.53 L698.68 492.97 L698.29 491.42 L697.54 489.95 L696.43 488.59 L695.00 487.39 L659.00 461.94 Z" fill="url(#gwall)" stroke="#111" stroke-width="0.9"/><path d="M973.60 381.49 L930.60 411.89 L929.17 413.09 L928.06 414.45 L927.31 415.92 L926.92 417.47 L926.92 419.04 L927.31 420.58 L927.31 433.58 L926.92 432.04 L926.92 430.47 L927.31 428.92 L928.06 427.45 L929.17 426.09 L930.60 424.89 L973.60 394.49 Z" fill="url(#gwall)" stroke="#111" stroke-width="0.9"/><path d="M659.00 448.94 L843.50 318.49 L846.96 316.40 L850.84 314.72 L855.04 313.49 L859.46 312.74 L864.00 312.49 L868.54 312.74 L872.96 313.49 L877.16 314.72 L881.04 316.40 L884.50 318.49 L973.60 381.49 L930.60 411.89 L929.30 412.96 L928.26 414.17 L927.50 415.47 L927.03 416.84 L926.87 418.25 L927.03 419.66 L927.50 421.03 L928.26 422.34 L929.30 423.54 L930.60 424.61 L967.00 450.35 L783.50 580.08 L780.04 582.17 L776.16 583.85 L771.96 585.08 L767.54 585.83 L763.00 586.09 L758.46 585.83 L754.04 585.08 L749.84 583.85 L745.96 582.17 L742.50 580.08 L653.00 516.81 L695.00 487.11 L696.30 486.04 L697.34 484.84 L698.10 483.53 L698.57 482.16 L698.73 480.75 L698.57 479.34 L698.10 477.97 L697.34 476.66 L696.30 475.46 L695.00 474.39 Z" fill="#fdfdfd" stroke="#111" stroke-width="0.9" stroke-linejoin="round"/><ellipse cx="861.80" cy="337.09" rx="14.8" ry="10.3" fill="url(#ghole)" stroke="#1a1a1a" stroke-width="0.9"/><ellipse cx="764.70" cy="560.43" rx="14.8" ry="10.3" fill="url(#ghole)" stroke="#1a1a1a" stroke-width="0.9"/><path d="M898.63 388.58 L898.36 388.39 L897.57 387.86 L897.29 387.68 L896.46 387.17 L896.16 387.00 L895.30 386.52 L894.99 386.36 L894.09 385.91 L893.78 385.76 L892.85 385.35 L892.52 385.21 L891.57 384.83 L891.23 384.70 L890.25 384.35 L889.91 384.24 L888.90 383.92 L888.55 383.82 L887.53 383.54 L887.17 383.45 L886.13 383.21 L885.76 383.13 L884.70 382.92 L884.33 382.86 L883.26 382.69 L882.89 382.63 L881.81 382.50 L881.43 382.46 L880.34 382.37 L879.96 382.34 L878.87 382.28 L878.49 382.27 L877.39 382.25 L877.01 382.25 L875.91 382.27 L875.53 382.28 L874.44 382.34 L874.06 382.37 L872.97 382.46 L872.59 382.50 L871.51 382.63 L871.14 382.69 L870.07 382.86 L869.70 382.92 L868.64 383.13 L868.36 383.19 L790.17 400.71 L789.99 400.75 L788.49 401.11 L788.31 401.16 L786.83 401.55 L786.65 401.60 L785.19 402.01 L785.01 402.06 L783.56 402.50 L783.38 402.56 L781.95 403.02 L781.78 403.08 L780.36 403.57 L780.19 403.63 L778.79 404.14 L778.62 404.21 L777.23 404.75 L777.07 404.81 L775.70 405.38 L775.54 405.44 L774.19 406.03 L774.03 406.10 L772.71 406.71 L772.55 406.79 L771.25 407.42 L771.09 407.50 L769.81 408.15 L769.66 408.23 L768.40 408.91 L768.25 408.99 L767.02 409.69 L766.87 409.77 L765.66 410.49 L765.52 410.58 L764.34 411.32 L764.19 411.41 L763.04 412.17 L762.90 412.26 L761.77 413.04 L761.63 413.14 L760.53 413.94 L760.40 414.04 L759.32 414.85 L759.20 414.95 L758.15 415.79 L758.02 415.89 L757.01 416.75 L756.89 416.85 L755.90 417.72 L755.78 417.83 L754.83 418.72 L754.71 418.83 L753.79 419.73 L753.68 419.84 L752.78 420.76 L752.68 420.87 L751.82 421.81 L751.71 421.92 L750.89 422.87 L750.79 422.99 L749.99 423.95 L749.90 424.07 L749.14 425.05 L749.05 425.17 L748.32 426.16 L748.23 426.28 L747.54 427.28 L747.46 427.41 L746.80 428.42 L746.72 428.54 L746.10 429.57 L746.03 429.70 L745.44 430.73 L745.37 430.86 L744.82 431.90 L744.76 432.03 L744.25 433.09 L744.19 433.22 L719.40 488.50 L719.32 488.70 L719.03 489.44 L718.94 489.71 L718.70 490.46 L718.62 490.73 L718.43 491.49 L718.38 491.76 L718.24 492.53 L718.21 492.80 L718.13 493.57 L718.11 493.84 L718.08 494.61 L718.08 494.88 L718.11 495.66 L718.13 495.93 L718.21 496.70 L718.24 496.97 L718.38 497.74 L718.43 498.01 L718.62 498.77 L718.70 499.04 L718.94 499.79 L719.03 500.05 L719.32 500.80 L719.43 501.06 L719.78 501.80 L719.90 502.05 L720.30 502.77 L720.45 503.02 L720.89 503.73 L721.05 503.98 L721.55 504.67 L721.73 504.91 L722.27 505.58 L722.46 505.81 L723.05 506.47 L723.26 506.69 L723.89 507.33 L724.12 507.54 L724.80 508.15 L725.04 508.36 L725.75 508.95 L726.01 509.15 L726.77 509.71 L727.04 509.90 L727.83 510.44 L728.11 510.62 L728.94 511.12 L729.24 511.30 L730.10 511.77 L730.41 511.93 L731.31 512.38 L731.62 512.53 L732.55 512.94 L732.88 513.08 L733.83 513.47 L734.17 513.59 L735.15 513.94 L735.49 514.06 L736.50 514.37 L736.85 514.47 L737.87 514.75 L738.23 514.84 L739.27 515.09 L739.64 515.17 L740.70 515.37 L741.07 515.44 L742.14 515.61 L742.51 515.66 L743.59 515.79 L743.97 515.83 L745.06 515.93 L745.44 515.95 L746.53 516.01 L746.91 516.02 L748.01 516.04 L748.39 516.04 L749.49 516.02 L749.87 516.01 L750.96 515.95 L751.34 515.93 L752.43 515.83 L752.81 515.79 L753.89 515.66 L754.26 515.61 L755.33 515.44 L755.70 515.37 L756.76 515.17 L757.04 515.11 L835.23 497.59 L835.41 497.54 L836.91 497.18 L837.09 497.14 L838.57 496.75 L838.75 496.70 L840.21 496.28 L840.39 496.23 L841.84 495.79 L842.02 495.74 L843.45 495.27 L843.62 495.21 L845.04 494.72 L845.21 494.66 L846.61 494.15 L846.78 494.09 L848.17 493.55 L848.33 493.48 L849.70 492.92 L849.86 492.85 L851.21 492.26 L851.37 492.19 L852.69 491.58 L852.85 491.51 L854.15 490.88 L854.31 490.80 L855.59 490.14 L855.74 490.06 L857.00 489.39 L857.15 489.30 L858.38 488.61 L858.53 488.52 L859.74 487.80 L859.88 487.71 L861.06 486.97 L861.21 486.88 L862.36 486.12 L862.50 486.03 L863.63 485.25 L863.77 485.16 L864.87 484.36 L865.00 484.26 L866.08 483.44 L866.20 483.34 L867.25 482.50 L867.38 482.40 L868.39 481.55 L868.51 481.44 L869.50 480.57 L869.62 480.47 L870.57 479.58 L870.69 479.47 L871.61 478.56 L871.72 478.45 L872.62 477.53 L872.72 477.42 L873.58 476.48 L873.69 476.37 L874.51 475.42 L874.61 475.30 L875.41 474.34 L875.50 474.22 L876.26 473.24 L876.35 473.12 L877.08 472.13 L877.17 472.01 L877.86 471.01 L877.94 470.89 L878.60 469.87 L878.68 469.75 L879.30 468.72 L879.37 468.60 L879.96 467.56 L880.03 467.44 L880.58 466.39 L880.64 466.26 L881.15 465.21 L881.21 465.08 L906.00 409.79 L906.08 409.60 L906.37 408.85 L906.46 408.59 L906.70 407.83 L906.78 407.57 L906.97 406.80 L907.02 406.54 L907.16 405.77 L907.19 405.50 L907.27 404.73 L907.29 404.46 L907.32 403.68 L907.32 403.41 L907.29 402.64 L907.27 402.37 L907.19 401.59 L907.16 401.32 L907.02 400.55 L906.97 400.29 L906.78 399.52 L906.70 399.26 L906.46 398.50 L906.37 398.24 L906.08 397.49 L905.97 397.23 L905.62 396.50 L905.50 396.24 L905.10 395.52 L904.95 395.27 L904.51 394.56 L904.35 394.32 L903.85 393.63 L903.67 393.39 L903.13 392.71 L902.94 392.48 L902.35 391.83 L902.14 391.60 L901.51 390.97 L901.28 390.75 L900.60 390.14 L900.36 389.93 L899.65 389.34 L899.39 389.14 Z" fill="#000" opacity="0.13" filter="url(#blur6)" transform="translate(0,6)"/><clipPath id="cfil"><path d="M898.63 388.58 L898.36 388.39 L897.57 387.86 L897.29 387.68 L896.46 387.17 L896.16 387.00 L895.30 386.52 L894.99 386.36 L894.09 385.91 L893.78 385.76 L892.85 385.35 L892.52 385.21 L891.57 384.83 L891.23 384.70 L890.25 384.35 L889.91 384.24 L888.90 383.92 L888.55 383.82 L887.53 383.54 L887.17 383.45 L886.13 383.21 L885.76 383.13 L884.70 382.92 L884.33 382.86 L883.26 382.69 L882.89 382.63 L881.81 382.50 L881.43 382.46 L880.34 382.37 L879.96 382.34 L878.87 382.28 L878.49 382.27 L877.39 382.25 L877.01 382.25 L875.91 382.27 L875.53 382.28 L874.44 382.34 L874.06 382.37 L872.97 382.46 L872.59 382.50 L871.51 382.63 L871.14 382.69 L870.07 382.86 L869.70 382.92 L868.64 383.13 L868.36 383.19 L790.17 400.71 L789.99 400.75 L788.49 401.11 L788.31 401.16 L786.83 401.55 L786.65 401.60 L785.19 402.01 L785.01 402.06 L783.56 402.50 L783.38 402.56 L781.95 403.02 L781.78 403.08 L780.36 403.57 L780.19 403.63 L778.79 404.14 L778.62 404.21 L777.23 404.75 L777.07 404.81 L775.70 405.38 L775.54 405.44 L774.19 406.03 L774.03 406.10 L772.71 406.71 L772.55 406.79 L771.25 407.42 L771.09 407.50 L769.81 408.15 L769.66 408.23 L768.40 408.91 L768.25 408.99 L767.02 409.69 L766.87 409.77 L765.66 410.49 L765.52 410.58 L764.34 411.32 L764.19 411.41 L763.04 412.17 L762.90 412.26 L761.77 413.04 L761.63 413.14 L760.53 413.94 L760.40 414.04 L759.32 414.85 L759.20 414.95 L758.15 415.79 L758.02 415.89 L757.01 416.75 L756.89 416.85 L755.90 417.72 L755.78 417.83 L754.83 418.72 L754.71 418.83 L753.79 419.73 L753.68 419.84 L752.78 420.76 L752.68 420.87 L751.82 421.81 L751.71 421.92 L750.89 422.87 L750.79 422.99 L749.99 423.95 L749.90 424.07 L749.14 425.05 L749.05 425.17 L748.32 426.16 L748.23 426.28 L747.54 427.28 L747.46 427.41 L746.80 428.42 L746.72 428.54 L746.10 429.57 L746.03 429.70 L745.44 430.73 L745.37 430.86 L744.82 431.90 L744.76 432.03 L744.25 433.09 L744.19 433.22 L719.40 488.50 L719.32 488.70 L719.03 489.44 L718.94 489.71 L718.70 490.46 L718.62 490.73 L718.43 491.49 L718.38 491.76 L718.24 492.53 L718.21 492.80 L718.13 493.57 L718.11 493.84 L718.08 494.61 L718.08 494.88 L718.11 495.66 L718.13 495.93 L718.21 496.70 L718.24 496.97 L718.38 497.74 L718.43 498.01 L718.62 498.77 L718.70 499.04 L718.94 499.79 L719.03 500.05 L719.32 500.80 L719.43 501.06 L719.78 501.80 L719.90 502.05 L720.30 502.77 L720.45 503.02 L720.89 503.73 L721.05 503.98 L721.55 504.67 L721.73 504.91 L722.27 505.58 L722.46 505.81 L723.05 506.47 L723.26 506.69 L723.89 507.33 L724.12 507.54 L724.80 508.15 L725.04 508.36 L725.75 508.95 L726.01 509.15 L726.77 509.71 L727.04 509.90 L727.83 510.44 L728.11 510.62 L728.94 511.12 L729.24 511.30 L730.10 511.77 L730.41 511.93 L731.31 512.38 L731.62 512.53 L732.55 512.94 L732.88 513.08 L733.83 513.47 L734.17 513.59 L735.15 513.94 L735.49 514.06 L736.50 514.37 L736.85 514.47 L737.87 514.75 L738.23 514.84 L739.27 515.09 L739.64 515.17 L740.70 515.37 L741.07 515.44 L742.14 515.61 L742.51 515.66 L743.59 515.79 L743.97 515.83 L745.06 515.93 L745.44 515.95 L746.53 516.01 L746.91 516.02 L748.01 516.04 L748.39 516.04 L749.49 516.02 L749.87 516.01 L750.96 515.95 L751.34 515.93 L752.43 515.83 L752.81 515.79 L753.89 515.66 L754.26 515.61 L755.33 515.44 L755.70 515.37 L756.76 515.17 L757.04 515.11 L835.23 497.59 L835.41 497.54 L836.91 497.18 L837.09 497.14 L838.57 496.75 L838.75 496.70 L840.21 496.28 L840.39 496.23 L841.84 495.79 L842.02 495.74 L843.45 495.27 L843.62 495.21 L845.04 494.72 L845.21 494.66 L846.61 494.15 L846.78 494.09 L848.17 493.55 L848.33 493.48 L849.70 492.92 L849.86 492.85 L851.21 492.26 L851.37 492.19 L852.69 491.58 L852.85 491.51 L854.15 490.88 L854.31 490.80 L855.59 490.14 L855.74 490.06 L857.00 489.39 L857.15 489.30 L858.38 488.61 L858.53 488.52 L859.74 487.80 L859.88 487.71 L861.06 486.97 L861.21 486.88 L862.36 486.12 L862.50 486.03 L863.63 485.25 L863.77 485.16 L864.87 484.36 L865.00 484.26 L866.08 483.44 L866.20 483.34 L867.25 482.50 L867.38 482.40 L868.39 481.55 L868.51 481.44 L869.50 480.57 L869.62 480.47 L870.57 479.58 L870.69 479.47 L871.61 478.56 L871.72 478.45 L872.62 477.53 L872.72 477.42 L873.58 476.48 L873.69 476.37 L874.51 475.42 L874.61 475.30 L875.41 474.34 L875.50 474.22 L876.26 473.24 L876.35 473.12 L877.08 472.13 L877.17 472.01 L877.86 471.01 L877.94 470.89 L878.60 469.87 L878.68 469.75 L879.30 468.72 L879.37 468.60 L879.96 467.56 L880.03 467.44 L880.58 466.39 L880.64 466.26 L881.15 465.21 L881.21 465.08 L906.00 409.79 L906.08 409.60 L906.37 408.85 L906.46 408.59 L906.70 407.83 L906.78 407.57 L906.97 406.80 L907.02 406.54 L907.16 405.77 L907.19 405.50 L907.27 404.73 L907.29 404.46 L907.32 403.68 L907.32 403.41 L907.29 402.64 L907.27 402.37 L907.19 401.59 L907.16 401.32 L907.02 400.55 L906.97 400.29 L906.78 399.52 L906.70 399.26 L906.46 398.50 L906.37 398.24 L906.08 397.49 L905.97 397.23 L905.62 396.50 L905.50 396.24 L905.10 395.52 L904.95 395.27 L904.51 394.56 L904.35 394.32 L903.85 393.63 L903.67 393.39 L903.13 392.71 L902.94 392.48 L902.35 391.83 L902.14 391.60 L901.51 390.97 L901.28 390.75 L900.60 390.14 L900.36 389.93 L899.65 389.34 L899.39 389.14 Z"/></clipPath><path d="M898.63 388.58 L898.36 388.39 L897.57 387.86 L897.29 387.68 L896.46 387.17 L896.16 387.00 L895.30 386.52 L894.99 386.36 L894.09 385.91 L893.78 385.76 L892.85 385.35 L892.52 385.21 L891.57 384.83 L891.23 384.70 L890.25 384.35 L889.91 384.24 L888.90 383.92 L888.55 383.82 L887.53 383.54 L887.17 383.45 L886.13 383.21 L885.76 383.13 L884.70 382.92 L884.33 382.86 L883.26 382.69 L882.89 382.63 L881.81 382.50 L881.43 382.46 L880.34 382.37 L879.96 382.34 L878.87 382.28 L878.49 382.27 L877.39 382.25 L877.01 382.25 L875.91 382.27 L875.53 382.28 L874.44 382.34 L874.06 382.37 L872.97 382.46 L872.59 382.50 L871.51 382.63 L871.14 382.69 L870.07 382.86 L869.70 382.92 L868.64 383.13 L868.36 383.19 L790.17 400.71 L789.99 400.75 L788.49 401.11 L788.31 401.16 L786.83 401.55 L786.65 401.60 L785.19 402.01 L785.01 402.06 L783.56 402.50 L783.38 402.56 L781.95 403.02 L781.78 403.08 L780.36 403.57 L780.19 403.63 L778.79 404.14 L778.62 404.21 L777.23 404.75 L777.07 404.81 L775.70 405.38 L775.54 405.44 L774.19 406.03 L774.03 406.10 L772.71 406.71 L772.55 406.79 L771.25 407.42 L771.09 407.50 L769.81 408.15 L769.66 408.23 L768.40 408.91 L768.25 408.99 L767.02 409.69 L766.87 409.77 L765.66 410.49 L765.52 410.58 L764.34 411.32 L764.19 411.41 L763.04 412.17 L762.90 412.26 L761.77 413.04 L761.63 413.14 L760.53 413.94 L760.40 414.04 L759.32 414.85 L759.20 414.95 L758.15 415.79 L758.02 415.89 L757.01 416.75 L756.89 416.85 L755.90 417.72 L755.78 417.83 L754.83 418.72 L754.71 418.83 L753.79 419.73 L753.68 419.84 L752.78 420.76 L752.68 420.87 L751.82 421.81 L751.71 421.92 L750.89 422.87 L750.79 422.99 L749.99 423.95 L749.90 424.07 L749.14 425.05 L749.05 425.17 L748.32 426.16 L748.23 426.28 L747.54 427.28 L747.46 427.41 L746.80 428.42 L746.72 428.54 L746.10 429.57 L746.03 429.70 L745.44 430.73 L745.37 430.86 L744.82 431.90 L744.76 432.03 L744.25 433.09 L744.19 433.22 L719.40 488.50 L719.32 488.70 L719.03 489.44 L718.94 489.71 L718.70 490.46 L718.62 490.73 L718.43 491.49 L718.38 491.76 L718.24 492.53 L718.21 492.80 L718.13 493.57 L718.11 493.84 L718.08 494.61 L718.08 494.88 L718.11 495.66 L718.13 495.93 L718.21 496.70 L718.24 496.97 L718.38 497.74 L718.43 498.01 L718.62 498.77 L718.70 499.04 L718.94 499.79 L719.03 500.05 L719.32 500.80 L719.43 501.06 L719.78 501.80 L719.90 502.05 L720.30 502.77 L720.45 503.02 L720.89 503.73 L721.05 503.98 L721.55 504.67 L721.73 504.91 L722.27 505.58 L722.46 505.81 L723.05 506.47 L723.26 506.69 L723.89 507.33 L724.12 507.54 L724.80 508.15 L725.04 508.36 L725.75 508.95 L726.01 509.15 L726.77 509.71 L727.04 509.90 L727.83 510.44 L728.11 510.62 L728.94 511.12 L729.24 511.30 L730.10 511.77 L730.41 511.93 L731.31 512.38 L731.62 512.53 L732.55 512.94 L732.88 513.08 L733.83 513.47 L734.17 513.59 L735.15 513.94 L735.49 514.06 L736.50 514.37 L736.85 514.47 L737.87 514.75 L738.23 514.84 L739.27 515.09 L739.64 515.17 L740.70 515.37 L741.07 515.44 L742.14 515.61 L742.51 515.66 L743.59 515.79 L743.97 515.83 L745.06 515.93 L745.44 515.95 L746.53 516.01 L746.91 516.02 L748.01 516.04 L748.39 516.04 L749.49 516.02 L749.87 516.01 L750.96 515.95 L751.34 515.93 L752.43 515.83 L752.81 515.79 L753.89 515.66 L754.26 515.61 L755.33 515.44 L755.70 515.37 L756.76 515.17 L757.04 515.11 L835.23 497.59 L835.41 497.54 L836.91 497.18 L837.09 497.14 L838.57 496.75 L838.75 496.70 L840.21 496.28 L840.39 496.23 L841.84 495.79 L842.02 495.74 L843.45 495.27 L843.62 495.21 L845.04 494.72 L845.21 494.66 L846.61 494.15 L846.78 494.09 L848.17 493.55 L848.33 493.48 L849.70 492.92 L849.86 492.85 L851.21 492.26 L851.37 492.19 L852.69 491.58 L852.85 491.51 L854.15 490.88 L854.31 490.80 L855.59 490.14 L855.74 490.06 L857.00 489.39 L857.15 489.30 L858.38 488.61 L858.53 488.52 L859.74 487.80 L859.88 487.71 L861.06 486.97 L861.21 486.88 L862.36 486.12 L862.50 486.03 L863.63 485.25 L863.77 485.16 L864.87 484.36 L865.00 484.26 L866.08 483.44 L866.20 483.34 L867.25 482.50 L867.38 482.40 L868.39 481.55 L868.51 481.44 L869.50 480.57 L869.62 480.47 L870.57 479.58 L870.69 479.47 L871.61 478.56 L871.72 478.45 L872.62 477.53 L872.72 477.42 L873.58 476.48 L873.69 476.37 L874.51 475.42 L874.61 475.30 L875.41 474.34 L875.50 474.22 L876.26 473.24 L876.35 473.12 L877.08 472.13 L877.17 472.01 L877.86 471.01 L877.94 470.89 L878.60 469.87 L878.68 469.75 L879.30 468.72 L879.37 468.60 L879.96 467.56 L880.03 467.44 L880.58 466.39 L880.64 466.26 L881.15 465.21 L881.21 465.08 L906.00 409.79 L906.08 409.60 L906.37 408.85 L906.46 408.59 L906.70 407.83 L906.78 407.57 L906.97 406.80 L907.02 406.54 L907.16 405.77 L907.19 405.50 L907.27 404.73 L907.29 404.46 L907.32 403.68 L907.32 403.41 L907.29 402.64 L907.27 402.37 L907.19 401.59 L907.16 401.32 L907.02 400.55 L906.97 400.29 L906.78 399.52 L906.70 399.26 L906.46 398.50 L906.37 398.24 L906.08 397.49 L905.97 397.23 L905.62 396.50 L905.50 396.24 L905.10 395.52 L904.95 395.27 L904.51 394.56 L904.35 394.32 L903.85 393.63 L903.67 393.39 L903.13 392.71 L902.94 392.48 L902.35 391.83 L902.14 391.60 L901.51 390.97 L901.28 390.75 L900.60 390.14 L900.36 389.93 L899.65 389.34 L899.39 389.14 Z" fill="#f4f4f4"/><g clip-path="url(#cfil)"><path d="M725.86 492.25 L725.88 493.02 L725.96 493.80 L726.10 494.57 L726.28 495.33 L726.53 496.09 L726.82 496.83 L727.16 497.57 L727.56 498.29 L728.00 499.00 L728.49 499.70 L729.03 500.37 L729.62 501.03 L730.25 501.66 L730.93 502.27 L731.64 502.86 L732.40 503.42 L733.19 503.95 L734.02 504.46 L734.89 504.94 L735.79 505.38 L736.71 505.80 L737.67 506.18 L738.65 506.53 L739.65 506.84 L740.67 507.12 L741.71 507.37 L742.77 507.57 L743.84 507.74 L744.92 507.88 L746.01 507.97 L747.10 508.03 L748.20 508.05 L749.30 508.03 L750.39 507.97 L751.48 507.88 L752.56 507.74 L753.63 507.57 L754.69 507.37 L832.88 489.84 L834.38 489.48 L835.86 489.09 L837.32 488.68 L838.78 488.24 L840.21 487.77 L841.63 487.28 L843.03 486.77 L844.42 486.23 L845.78 485.67 L847.13 485.08 L848.45 484.47 L849.75 483.84 L851.03 483.19 L852.29 482.51 L853.52 481.81 L854.73 481.09 L855.91 480.36 L857.07 479.60 L858.20 478.82 L859.30 478.02 L860.38 477.20 L861.42 476.36 L862.44 475.51 L863.43 474.64 L864.38 473.75 L865.31 472.84 L866.20 471.92 L867.06 470.99 L867.89 470.04 L868.69 469.07 L869.45 468.09 L870.18 467.10 L870.87 466.10 L871.53 465.08 L872.15 464.06 L872.74 463.02 L873.29 461.97 L873.80 460.92 L898.58 405.63 L898.87 404.88 L899.12 404.13 L899.30 403.36 L899.44 402.59 L899.52 401.82 L899.54 401.05" fill="none" stroke="#2a2a2a" stroke-width="7" opacity="0.8" filter="url(#blur3)"/></g><path d="M898.63 388.58 L898.36 388.39 L897.57 387.86 L897.29 387.68 L896.46 387.17 L896.16 387.00 L895.30 386.52 L894.99 386.36 L894.09 385.91 L893.78 385.76 L892.85 385.35 L892.52 385.21 L891.57 384.83 L891.23 384.70 L890.25 384.35 L889.91 384.24 L888.90 383.92 L888.55 383.82 L887.53 383.54 L887.17 383.45 L886.13 383.21 L885.76 383.13 L884.70 382.92 L884.33 382.86 L883.26 382.69 L882.89 382.63 L881.81 382.50 L881.43 382.46 L880.34 382.37 L879.96 382.34 L878.87 382.28 L878.49 382.27 L877.39 382.25 L877.01 382.25 L875.91 382.27 L875.53 382.28 L874.44 382.34 L874.06 382.37 L872.97 382.46 L872.59 382.50 L871.51 382.63 L871.14 382.69 L870.07 382.86 L869.70 382.92 L868.64 383.13 L868.36 383.19 L790.17 400.71 L789.99 400.75 L788.49 401.11 L788.31 401.16 L786.83 401.55 L786.65 401.60 L785.19 402.01 L785.01 402.06 L783.56 402.50 L783.38 402.56 L781.95 403.02 L781.78 403.08 L780.36 403.57 L780.19 403.63 L778.79 404.14 L778.62 404.21 L777.23 404.75 L777.07 404.81 L775.70 405.38 L775.54 405.44 L774.19 406.03 L774.03 406.10 L772.71 406.71 L772.55 406.79 L771.25 407.42 L771.09 407.50 L769.81 408.15 L769.66 408.23 L768.40 408.91 L768.25 408.99 L767.02 409.69 L766.87 409.77 L765.66 410.49 L765.52 410.58 L764.34 411.32 L764.19 411.41 L763.04 412.17 L762.90 412.26 L761.77 413.04 L761.63 413.14 L760.53 413.94 L760.40 414.04 L759.32 414.85 L759.20 414.95 L758.15 415.79 L758.02 415.89 L757.01 416.75 L756.89 416.85 L755.90 417.72 L755.78 417.83 L754.83 418.72 L754.71 418.83 L753.79 419.73 L753.68 419.84 L752.78 420.76 L752.68 420.87 L751.82 421.81 L751.71 421.92 L750.89 422.87 L750.79 422.99 L749.99 423.95 L749.90 424.07 L749.14 425.05 L749.05 425.17 L748.32 426.16 L748.23 426.28 L747.54 427.28 L747.46 427.41 L746.80 428.42 L746.72 428.54 L746.10 429.57 L746.03 429.70 L745.44 430.73 L745.37 430.86 L744.82 431.90 L744.76 432.03 L744.25 433.09 L744.19 433.22 L719.40 488.50 L719.32 488.70 L719.03 489.44 L718.94 489.71 L718.70 490.46 L718.62 490.73 L718.43 491.49 L718.38 491.76 L718.24 492.53 L718.21 492.80 L718.13 493.57 L718.11 493.84 L718.08 494.61 L718.08 494.88 L718.11 495.66 L718.13 495.93 L718.21 496.70 L718.24 496.97 L718.38 497.74 L718.43 498.01 L718.62 498.77 L718.70 499.04 L718.94 499.79 L719.03 500.05 L719.32 500.80 L719.43 501.06 L719.78 501.80 L719.90 502.05 L720.30 502.77 L720.45 503.02 L720.89 503.73 L721.05 503.98 L721.55 504.67 L721.73 504.91 L722.27 505.58 L722.46 505.81 L723.05 506.47 L723.26 506.69 L723.89 507.33 L724.12 507.54 L724.80 508.15 L725.04 508.36 L725.75 508.95 L726.01 509.15 L726.77 509.71 L727.04 509.90 L727.83 510.44 L728.11 510.62 L728.94 511.12 L729.24 511.30 L730.10 511.77 L730.41 511.93 L731.31 512.38 L731.62 512.53 L732.55 512.94 L732.88 513.08 L733.83 513.47 L734.17 513.59 L735.15 513.94 L735.49 514.06 L736.50 514.37 L736.85 514.47 L737.87 514.75 L738.23 514.84 L739.27 515.09 L739.64 515.17 L740.70 515.37 L741.07 515.44 L742.14 515.61 L742.51 515.66 L743.59 515.79 L743.97 515.83 L745.06 515.93 L745.44 515.95 L746.53 516.01 L746.91 516.02 L748.01 516.04 L748.39 516.04 L749.49 516.02 L749.87 516.01 L750.96 515.95 L751.34 515.93 L752.43 515.83 L752.81 515.79 L753.89 515.66 L754.26 515.61 L755.33 515.44 L755.70 515.37 L756.76 515.17 L757.04 515.11 L835.23 497.59 L835.41 497.54 L836.91 497.18 L837.09 497.14 L838.57 496.75 L838.75 496.70 L840.21 496.28 L840.39 496.23 L841.84 495.79 L842.02 495.74 L843.45 495.27 L843.62 495.21 L845.04 494.72 L845.21 494.66 L846.61 494.15 L846.78 494.09 L848.17 493.55 L848.33 493.48 L849.70 492.92 L849.86 492.85 L851.21 492.26 L851.37 492.19 L852.69 491.58 L852.85 491.51 L854.15 490.88 L854.31 490.80 L855.59 490.14 L855.74 490.06 L857.00 489.39 L857.15 489.30 L858.38 488.61 L858.53 488.52 L859.74 487.80 L859.88 487.71 L861.06 486.97 L861.21 486.88 L862.36 486.12 L862.50 486.03 L863.63 485.25 L863.77 485.16 L864.87 484.36 L865.00 484.26 L866.08 483.44 L866.20 483.34 L867.25 482.50 L867.38 482.40 L868.39 481.55 L868.51 481.44 L869.50 480.57 L869.62 480.47 L870.57 479.58 L870.69 479.47 L871.61 478.56 L871.72 478.45 L872.62 477.53 L872.72 477.42 L873.58 476.48 L873.69 476.37 L874.51 475.42 L874.61 475.30 L875.41 474.34 L875.50 474.22 L876.26 473.24 L876.35 473.12 L877.08 472.13 L877.17 472.01 L877.86 471.01 L877.94 470.89 L878.60 469.87 L878.68 469.75 L879.30 468.72 L879.37 468.60 L879.96 467.56 L880.03 467.44 L880.58 466.39 L880.64 466.26 L881.15 465.21 L881.21 465.08 L906.00 409.79 L906.08 409.60 L906.37 408.85 L906.46 408.59 L906.70 407.83 L906.78 407.57 L906.97 406.80 L907.02 406.54 L907.16 405.77 L907.19 405.50 L907.27 404.73 L907.29 404.46 L907.32 403.68 L907.32 403.41 L907.29 402.64 L907.27 402.37 L907.19 401.59 L907.16 401.32 L907.02 400.55 L906.97 400.29 L906.78 399.52 L906.70 399.26 L906.46 398.50 L906.37 398.24 L906.08 397.49 L905.97 397.23 L905.62 396.50 L905.50 396.24 L905.10 395.52 L904.95 395.27 L904.51 394.56 L904.35 394.32 L903.85 393.63 L903.67 393.39 L903.13 392.71 L902.94 392.48 L902.35 391.83 L902.14 391.60 L901.51 390.97 L901.28 390.75 L900.60 390.14 L900.36 389.93 L899.65 389.34 L899.39 389.14 Z" fill="none" stroke="#111" stroke-width="0.9"/><path d="M725.86 443.75 L725.88 444.52 L725.96 445.30 L726.10 446.07 L726.28 446.83 L726.53 447.59 L726.82 448.33 L727.16 449.07 L727.56 449.79 L728.00 450.50 L728.49 451.20 L729.03 451.87 L729.62 452.53 L730.25 453.16 L730.93 453.77 L731.64 454.36 L732.40 454.92 L733.19 455.45 L734.02 455.96 L734.89 456.44 L735.79 456.88 L736.71 457.30 L737.67 457.68 L738.65 458.03 L739.65 458.34 L740.67 458.62 L741.71 458.87 L742.77 459.07 L743.84 459.24 L744.92 459.38 L746.01 459.47 L747.10 459.53 L748.20 459.55 L749.30 459.53 L750.39 459.47 L751.48 459.38 L752.56 459.24 L753.63 459.07 L754.69 458.87 L832.88 441.34 L834.38 440.98 L835.86 440.59 L837.32 440.18 L838.78 439.74 L840.21 439.27 L841.63 438.78 L843.03 438.27 L844.42 437.73 L845.78 437.17 L847.13 436.58 L848.45 435.97 L849.75 435.34 L851.03 434.69 L852.29 434.01 L853.52 433.31 L854.73 432.59 L855.91 431.86 L857.07 431.10 L858.20 430.32 L859.30 429.52 L860.38 428.70 L861.42 427.86 L862.44 427.01 L863.43 426.14 L864.38 425.25 L865.31 424.34 L866.20 423.42 L867.06 422.49 L867.89 421.54 L868.69 420.57 L869.45 419.59 L870.18 418.60 L870.87 417.60 L871.53 416.58 L872.15 415.56 L872.74 414.52 L873.29 413.47 L873.80 412.42 L898.58 357.13 L898.87 356.38 L899.12 355.63 L899.30 354.86 L899.44 354.09 L899.52 353.32 L899.54 352.55 L899.54 399.55 L899.52 400.32 L899.44 401.09 L899.30 401.86 L899.12 402.63 L898.87 403.38 L898.58 404.13 L873.80 459.42 L873.29 460.47 L872.74 461.52 L872.15 462.56 L871.53 463.58 L870.87 464.60 L870.18 465.60 L869.45 466.59 L868.69 467.57 L867.89 468.54 L867.06 469.49 L866.20 470.42 L865.31 471.34 L864.38 472.25 L863.43 473.14 L862.44 474.01 L861.42 474.86 L860.38 475.70 L859.30 476.52 L858.20 477.32 L857.07 478.10 L855.91 478.86 L854.73 479.59 L853.52 480.31 L852.29 481.01 L851.03 481.69 L849.75 482.34 L848.45 482.97 L847.13 483.58 L845.78 484.17 L844.42 484.73 L843.03 485.27 L841.63 485.78 L840.21 486.27 L838.78 486.74 L837.32 487.18 L835.86 487.59 L834.38 487.98 L832.88 488.34 L754.69 505.87 L753.63 506.07 L752.56 506.24 L751.48 506.38 L750.39 506.47 L749.30 506.53 L748.20 506.55 L747.10 506.53 L746.01 506.47 L744.92 506.38 L743.84 506.24 L742.77 506.07 L741.71 505.87 L740.67 505.62 L739.65 505.34 L738.65 505.03 L737.67 504.68 L736.71 504.30 L735.79 503.88 L734.89 503.44 L734.02 502.96 L733.19 502.45 L732.40 501.92 L731.64 501.36 L730.93 500.77 L730.25 500.16 L729.62 499.53 L729.03 498.87 L728.49 498.20 L728.00 497.50 L727.56 496.79 L727.16 496.07 L726.82 495.33 L726.53 494.59 L726.28 493.83 L726.10 493.07 L725.96 492.30 L725.88 491.52 L725.86 490.75 Z" fill="url(#gboss)"/><path d="M725.86 490.75 L725.88 491.52 L725.96 492.30 L726.10 493.07 L726.28 493.83 L726.53 494.59 L726.82 495.33 L727.16 496.07 L727.56 496.79 L728.00 497.50 L728.49 498.20 L729.03 498.87 L729.62 499.53 L730.25 500.16 L730.93 500.77 L731.64 501.36 L732.40 501.92 L733.19 502.45 L734.02 502.96 L734.89 503.44 L735.79 503.88 L736.71 504.30 L737.67 504.68 L738.65 505.03 L739.65 505.34 L740.67 505.62 L741.71 505.87 L742.77 506.07 L743.84 506.24 L744.92 506.38 L746.01 506.47 L747.10 506.53 L748.20 506.55 L749.30 506.53 L750.39 506.47 L751.48 506.38 L752.56 506.24 L753.63 506.07 L754.69 505.87 L832.88 488.34 L834.38 487.98 L835.86 487.59 L837.32 487.18 L838.78 486.74 L840.21 486.27 L841.63 485.78 L843.03 485.27 L844.42 484.73 L845.78 484.17 L847.13 483.58 L848.45 482.97 L849.75 482.34 L851.03 481.69 L852.29 481.01 L853.52 480.31 L854.73 479.59 L855.91 478.86 L857.07 478.10 L858.20 477.32 L859.30 476.52 L860.38 475.70 L861.42 474.86 L862.44 474.01 L863.43 473.14 L864.38 472.25 L865.31 471.34 L866.20 470.42 L867.06 469.49 L867.89 468.54 L868.69 467.57 L869.45 466.59 L870.18 465.60 L870.87 464.60 L871.53 463.58 L872.15 462.56 L872.74 461.52 L873.29 460.47 L873.80 459.42 L898.58 404.13 L898.87 403.38 L899.12 402.63 L899.30 401.86 L899.44 401.09 L899.52 400.32 L899.54 399.55" fill="none" stroke="#ddd" stroke-width="0.8" stroke-dasharray="1.6 1.2"/><path d="M893.00 341.38 L892.21 340.84 L891.38 340.33 L890.51 339.86 L889.61 339.41 L888.69 339.00 L887.73 338.61 L886.75 338.26 L885.75 337.95 L884.73 337.67 L883.69 337.43 L882.63 337.22 L881.56 337.05 L880.48 336.92 L879.39 336.82 L878.30 336.77 L877.20 336.75 L876.10 336.77 L875.01 336.82 L873.92 336.92 L872.84 337.05 L871.77 337.22 L870.71 337.43 L792.52 354.95 L791.02 355.31 L789.54 355.70 L788.08 356.12 L786.62 356.56 L785.19 357.02 L783.77 357.51 L782.37 358.03 L780.98 358.56 L779.62 359.13 L778.27 359.71 L776.95 360.32 L775.65 360.95 L774.37 361.61 L773.11 362.28 L771.88 362.98 L770.67 363.70 L769.49 364.44 L768.33 365.20 L767.20 365.98 L766.10 366.78 L765.02 367.60 L763.98 368.43 L762.96 369.29 L761.97 370.16 L761.02 371.05 L760.09 371.95 L759.20 372.87 L758.34 373.81 L757.51 374.76 L756.71 375.72 L755.95 376.70 L755.22 377.69 L754.53 378.70 L753.87 379.71 L753.25 380.74 L752.66 381.77 L752.11 382.82 L751.60 383.88 L726.82 439.16 L726.53 439.91 L726.28 440.67 L726.10 441.43 L725.96 442.20 L725.88 442.97 L725.86 443.75 L725.88 444.52 L725.96 445.30 L726.10 446.07 L726.28 446.83 L726.53 447.59 L726.82 448.33 L727.16 449.07 L727.56 449.79 L728.00 450.50 L728.49 451.20 L729.03 451.87 L729.62 452.53 L730.25 453.16 L730.93 453.77 L731.64 454.36 L732.40 454.92 L733.19 455.45 L734.02 455.96 L734.89 456.44 L735.79 456.88 L736.71 457.30 L737.67 457.68 L738.65 458.03 L739.65 458.34 L740.67 458.62 L741.71 458.87 L742.77 459.07 L743.84 459.24 L744.92 459.38 L746.01 459.47 L747.10 459.53 L748.20 459.55 L749.30 459.53 L750.39 459.47 L751.48 459.38 L752.56 459.24 L753.63 459.07 L754.69 458.87 L832.88 441.34 L834.38 440.98 L835.86 440.59 L837.32 440.18 L838.78 439.74 L840.21 439.27 L841.63 438.78 L843.03 438.27 L844.42 437.73 L845.78 437.17 L847.13 436.58 L848.45 435.97 L849.75 435.34 L851.03 434.69 L852.29 434.01 L853.52 433.31 L854.73 432.59 L855.91 431.86 L857.07 431.10 L858.20 430.32 L859.30 429.52 L860.38 428.70 L861.42 427.86 L862.44 427.01 L863.43 426.14 L864.38 425.25 L865.31 424.34 L866.20 423.42 L867.06 422.49 L867.89 421.54 L868.69 420.57 L869.45 419.59 L870.18 418.60 L870.87 417.60 L871.53 416.58 L872.15 415.56 L872.74 414.52 L873.29 413.47 L873.80 412.42 L898.58 357.13 L898.87 356.38 L899.12 355.63 L899.30 354.86 L899.44 354.09 L899.52 353.32 L899.54 352.55 L899.52 351.77 L899.44 351.00 L899.30 350.23 L899.12 349.46 L898.87 348.71 L898.58 347.96 L898.24 347.22 L897.84 346.50 L897.40 345.79 L896.91 345.10 L896.37 344.42 L895.78 343.77 L895.15 343.13 L894.47 342.52 L893.76 341.94 Z" fill="#eafcfd" stroke="#00dce4" stroke-width="1.35" stroke-linejoin="round"/><ellipse cx="812.70" cy="398.15" rx="54.3" ry="38.2" fill="url(#gbore)" stroke="#00dce4" stroke-width="1.35"/><ellipse cx="748.20" cy="443.75" rx="9" ry="6.3" fill="#3c3c3c" stroke="#00dce4" stroke-width="1.3"/><ellipse cx="877.20" cy="352.55" rx="9" ry="6.3" fill="#3c3c3c" stroke="#00dce4" stroke-width="1.3"/><g stroke="#000" stroke-width="1"><line x1="812.7" y1="398.1471" x2="813.5" y2="306"/><line x1="812.7" y1="398.1471" x2="721" y2="463.5"/><line x1="812.7" y1="398.1471" x2="905.5" y2="463.2"/></g><path d="M813.5 292.8 L816 307.8 H811 Z" fill="#0000ff"/><path d="M707.6 473 L719.6 461.2 L722.2 465.4 Z" fill="#ff0000"/><path d="M918.7 472.7 L903.8 465.2 L906.3 461.1 Z" fill="#00c050"/><g stroke="#474747" stroke-width="2" fill="#474747"><line x1="300" y1="143.3" x2="407" y2="143.3"/><path d="M293 143.3 L303 138.5 L303 148.1 Z" stroke="none"/><line x1="300" y1="266.3" x2="407" y2="266.3"/><path d="M293 266.3 L303 261.5 L303 271.1 Z" stroke="none"/><line x1="300" y1="395.5" x2="407" y2="395.5"/><path d="M293 395.5 L303 390.7 L303 400.3 Z" stroke="none"/><line x1="300" y1="552.6" x2="407" y2="552.6"/><path d="M293 552.6 L303 547.8 L303 557.4 Z" stroke="none"/><line x1="517" y1="268" x2="622" y2="50"/><path d="M627.2 39.4 L617.2 46.8 L627.8 51.4 Z" stroke="none"/></g></svg></body></html>
